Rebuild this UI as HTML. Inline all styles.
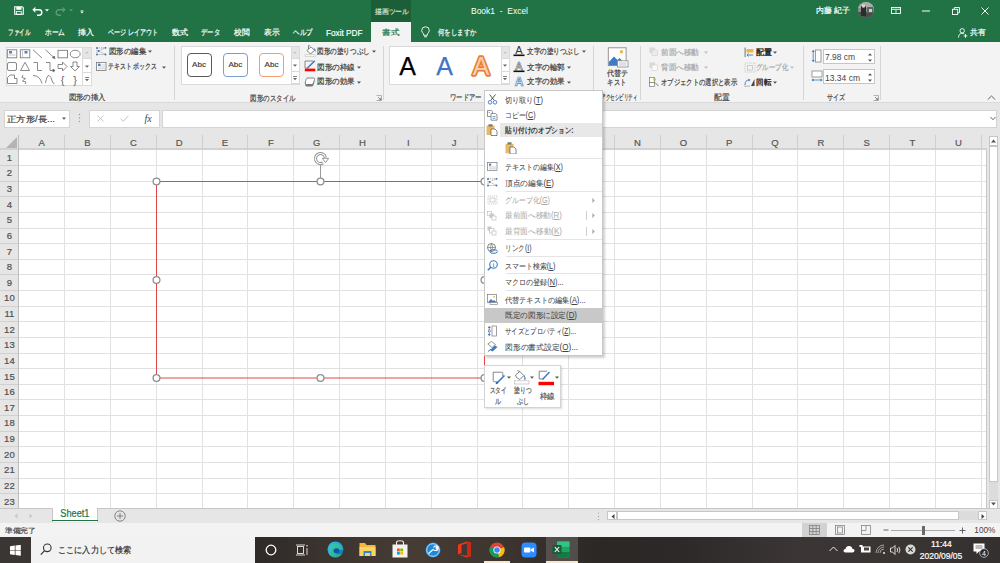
<!DOCTYPE html>
<html><head><meta charset="utf-8"><style>
html,body{margin:0;padding:0;width:1000px;height:563px;overflow:hidden;background:#fff;font-family:"Liberation Sans",sans-serif;}
body{position:relative;}
div,svg{box-sizing:border-box;}
[id^=t]{-webkit-text-stroke:0.2px currentColor;}
</style></head><body>
<div style="position:absolute;left:0px;top:0px;width:1000px;height:42px;background:#217346"></div>
<div style="position:absolute;left:371px;top:0px;width:40px;height:22px;background:#1b5e38"></div>
<div style="position:absolute;left:371px;top:22px;width:40px;height:20px;background:#f3f3f3"></div>
<div id="t0" style="position:absolute;left:375px;top:6.68px;font-size:7.39px;line-height:9.24px;color:#d8e6dc;font-weight:normal;font-family:'Liberation Sans', sans-serif;white-space:nowrap;transform:scaleX(0.9714);transform-origin:left center;">描画ツール</div>
<div id="t1" style="position:absolute;left:471px;top:4.56px;font-size:9.5px;line-height:11.88px;color:#ffffff;font-weight:normal;font-family:'Liberation Sans', sans-serif;white-space:nowrap;transform:scaleX(0.8921);transform-origin:left center;-webkit-text-stroke:0">Book1&nbsp;&nbsp;-&nbsp;&nbsp;Excel</div>
<div id="t2" style="position:absolute;left:816px;top:6.13px;font-size:8.27px;line-height:10.34px;color:#ffffff;font-weight:normal;font-family:'Liberation Sans', sans-serif;white-space:nowrap;transform:scaleX(0.9913);transform-origin:left center;">内藤 紀子</div>
<div id="t3" style="position:absolute;left:8px;top:28.13px;font-size:8.27px;line-height:10.34px;color:#ffffff;font-weight:normal;font-family:'Liberation Sans', sans-serif;white-space:nowrap;transform:scaleX(0.6875);transform-origin:left center;">ファイル</div>
<div id="t4" style="position:absolute;left:45px;top:28.13px;font-size:8.27px;line-height:10.34px;color:#ffffff;font-weight:normal;font-family:'Liberation Sans', sans-serif;white-space:nowrap;transform:scaleX(0.8333);transform-origin:left center;">ホーム</div>
<div id="t5" style="position:absolute;left:78px;top:28.13px;font-size:8.27px;line-height:10.34px;color:#ffffff;font-weight:normal;font-family:'Liberation Sans', sans-serif;white-space:nowrap;">挿入</div>
<div id="t6" style="position:absolute;left:108px;top:28.13px;font-size:8.27px;line-height:10.34px;color:#ffffff;font-weight:normal;font-family:'Liberation Sans', sans-serif;white-space:nowrap;transform:scaleX(0.7542);transform-origin:left center;">ページ レイアウト</div>
<div id="t7" style="position:absolute;left:172px;top:28.13px;font-size:8.27px;line-height:10.34px;color:#ffffff;font-weight:normal;font-family:'Liberation Sans', sans-serif;white-space:nowrap;">数式</div>
<div id="t8" style="position:absolute;left:201px;top:28.13px;font-size:8.27px;line-height:10.34px;color:#ffffff;font-weight:normal;font-family:'Liberation Sans', sans-serif;white-space:nowrap;transform:scaleX(0.7917);transform-origin:left center;">データ</div>
<div id="t9" style="position:absolute;left:234px;top:28.13px;font-size:8.27px;line-height:10.34px;color:#ffffff;font-weight:normal;font-family:'Liberation Sans', sans-serif;white-space:nowrap;transform:scaleX(0.9688);transform-origin:left center;">校閲</div>
<div id="t10" style="position:absolute;left:263.5px;top:28.13px;font-size:8.27px;line-height:10.34px;color:#ffffff;font-weight:normal;font-family:'Liberation Sans', sans-serif;white-space:nowrap;transform:scaleX(0.9688);transform-origin:left center;">表示</div>
<div id="t11" style="position:absolute;left:292.5px;top:28.13px;font-size:8.27px;line-height:10.34px;color:#ffffff;font-weight:normal;font-family:'Liberation Sans', sans-serif;white-space:nowrap;transform:scaleX(0.8125);transform-origin:left center;">ヘルプ</div>
<div id="t12" style="position:absolute;left:325.5px;top:26.56px;font-size:9.5px;line-height:11.88px;color:#ffffff;font-weight:normal;font-family:'Liberation Sans', sans-serif;white-space:nowrap;transform:scaleX(0.8642);transform-origin:left center;">Foxit PDF</div>
<div id="t13" style="position:absolute;left:382px;top:28.13px;font-size:8.27px;line-height:10.34px;color:#217346;font-weight:normal;font-family:'Liberation Sans', sans-serif;white-space:nowrap;transform:scaleX(1.0625);transform-origin:left center;">書式</div>
<div id="t14" style="position:absolute;left:437.5px;top:28.13px;font-size:8.27px;line-height:10.34px;color:#ffffff;font-weight:normal;font-family:'Liberation Sans', sans-serif;white-space:nowrap;transform:scaleX(0.8021);transform-origin:left center;">何をしますか</div>
<div id="t15" style="position:absolute;left:970px;top:28.13px;font-size:8.27px;line-height:10.34px;color:#ffffff;font-weight:normal;font-family:'Liberation Sans', sans-serif;white-space:nowrap;transform:scaleX(0.9688);transform-origin:left center;">共有</div>
<div style="position:absolute;left:0px;top:42px;width:1000px;height:61px;background:#f3f3f3;border-bottom:1px solid #dadada"></div>
<div style="position:absolute;left:174px;top:46px;width:1px;height:54px;background:#d6d6d6"></div>
<div style="position:absolute;left:383px;top:46px;width:1px;height:54px;background:#d6d6d6"></div>
<div style="position:absolute;left:593px;top:46px;width:1px;height:54px;background:#d6d6d6"></div>
<div style="position:absolute;left:640px;top:46px;width:1px;height:54px;background:#d6d6d6"></div>
<div style="position:absolute;left:803px;top:46px;width:1px;height:54px;background:#d6d6d6"></div>
<div style="position:absolute;left:880px;top:46px;width:1px;height:54px;background:#d6d6d6"></div>
<div style="position:absolute;left:0px;top:103px;width:1000px;height:30px;background:#e6e6e6"></div>
<div style="position:absolute;left:3.5px;top:109.5px;width:66px;height:18.5px;background:#fff;border:1px solid #d4d4d4"></div>
<div style="position:absolute;left:88.5px;top:109.5px;width:71px;height:18.5px;background:#fff;border:1px solid #d4d4d4"></div>
<div style="position:absolute;left:161.5px;top:109.5px;width:835px;height:18.5px;background:#fff;border:1px solid #d4d4d4"></div>
<div style="position:absolute;left:0px;top:133px;width:987px;height:16.5px;background:#e6e6e6"></div>
<div style="position:absolute;left:0px;top:149.5px;width:18.75px;height:359px;background:#e6e6e6"></div>
<div style="position:absolute;left:18.75px;top:149.5px;width:968px;height:359px;background:#fff"></div>
<svg style="position:absolute;left:0px;top:0px;" width="1000" height="563" viewBox="0 0 1000 563"><line x1="64.5" y1="149.9" x2="64.5" y2="508.5" stroke="#e1e1e1" stroke-width="1"/><line x1="110.5" y1="149.9" x2="110.5" y2="508.5" stroke="#e1e1e1" stroke-width="1"/><line x1="156.5" y1="149.9" x2="156.5" y2="508.5" stroke="#e1e1e1" stroke-width="1"/><line x1="202.5" y1="149.9" x2="202.5" y2="508.5" stroke="#e1e1e1" stroke-width="1"/><line x1="247.5" y1="149.9" x2="247.5" y2="508.5" stroke="#e1e1e1" stroke-width="1"/><line x1="293.5" y1="149.9" x2="293.5" y2="508.5" stroke="#e1e1e1" stroke-width="1"/><line x1="339.5" y1="149.9" x2="339.5" y2="508.5" stroke="#e1e1e1" stroke-width="1"/><line x1="385.5" y1="149.9" x2="385.5" y2="508.5" stroke="#e1e1e1" stroke-width="1"/><line x1="431.5" y1="149.9" x2="431.5" y2="508.5" stroke="#e1e1e1" stroke-width="1"/><line x1="477.5" y1="149.9" x2="477.5" y2="508.5" stroke="#e1e1e1" stroke-width="1"/><line x1="522.5" y1="149.9" x2="522.5" y2="508.5" stroke="#e1e1e1" stroke-width="1"/><line x1="568.5" y1="149.9" x2="568.5" y2="508.5" stroke="#e1e1e1" stroke-width="1"/><line x1="614.5" y1="149.9" x2="614.5" y2="508.5" stroke="#e1e1e1" stroke-width="1"/><line x1="660.5" y1="149.9" x2="660.5" y2="508.5" stroke="#e1e1e1" stroke-width="1"/><line x1="706.5" y1="149.9" x2="706.5" y2="508.5" stroke="#e1e1e1" stroke-width="1"/><line x1="752.5" y1="149.9" x2="752.5" y2="508.5" stroke="#e1e1e1" stroke-width="1"/><line x1="797.5" y1="149.9" x2="797.5" y2="508.5" stroke="#e1e1e1" stroke-width="1"/><line x1="843.5" y1="149.9" x2="843.5" y2="508.5" stroke="#e1e1e1" stroke-width="1"/><line x1="889.5" y1="149.9" x2="889.5" y2="508.5" stroke="#e1e1e1" stroke-width="1"/><line x1="935.5" y1="149.9" x2="935.5" y2="508.5" stroke="#e1e1e1" stroke-width="1"/><line x1="981.5" y1="149.9" x2="981.5" y2="508.5" stroke="#e1e1e1" stroke-width="1"/><line x1="19" y1="165.5" x2="987" y2="165.5" stroke="#e1e1e1" stroke-width="1"/><line x1="19" y1="181.5" x2="987" y2="181.5" stroke="#e1e1e1" stroke-width="1"/><line x1="19" y1="196.5" x2="987" y2="196.5" stroke="#e1e1e1" stroke-width="1"/><line x1="19" y1="212.5" x2="987" y2="212.5" stroke="#e1e1e1" stroke-width="1"/><line x1="19" y1="228.5" x2="987" y2="228.5" stroke="#e1e1e1" stroke-width="1"/><line x1="19" y1="243.5" x2="987" y2="243.5" stroke="#e1e1e1" stroke-width="1"/><line x1="19" y1="259.5" x2="987" y2="259.5" stroke="#e1e1e1" stroke-width="1"/><line x1="19" y1="274.5" x2="987" y2="274.5" stroke="#e1e1e1" stroke-width="1"/><line x1="19" y1="290.5" x2="987" y2="290.5" stroke="#e1e1e1" stroke-width="1"/><line x1="19" y1="306.5" x2="987" y2="306.5" stroke="#e1e1e1" stroke-width="1"/><line x1="19" y1="321.5" x2="987" y2="321.5" stroke="#e1e1e1" stroke-width="1"/><line x1="19" y1="337.5" x2="987" y2="337.5" stroke="#e1e1e1" stroke-width="1"/><line x1="19" y1="353.5" x2="987" y2="353.5" stroke="#e1e1e1" stroke-width="1"/><line x1="19" y1="368.5" x2="987" y2="368.5" stroke="#e1e1e1" stroke-width="1"/><line x1="19" y1="384.5" x2="987" y2="384.5" stroke="#e1e1e1" stroke-width="1"/><line x1="19" y1="399.5" x2="987" y2="399.5" stroke="#e1e1e1" stroke-width="1"/><line x1="19" y1="415.5" x2="987" y2="415.5" stroke="#e1e1e1" stroke-width="1"/><line x1="19" y1="431.5" x2="987" y2="431.5" stroke="#e1e1e1" stroke-width="1"/><line x1="19" y1="446.5" x2="987" y2="446.5" stroke="#e1e1e1" stroke-width="1"/><line x1="19" y1="462.5" x2="987" y2="462.5" stroke="#e1e1e1" stroke-width="1"/><line x1="19" y1="478.5" x2="987" y2="478.5" stroke="#e1e1e1" stroke-width="1"/><line x1="19" y1="493.5" x2="987" y2="493.5" stroke="#e1e1e1" stroke-width="1"/></svg>
<svg style="position:absolute;left:0;top:0" width="1000" height="563"><line x1="18.5" y1="135" x2="18.5" y2="149" stroke="#cfcfcf"/><line x1="64.5" y1="135" x2="64.5" y2="149" stroke="#cfcfcf"/><line x1="110.5" y1="135" x2="110.5" y2="149" stroke="#cfcfcf"/><line x1="156.5" y1="135" x2="156.5" y2="149" stroke="#cfcfcf"/><line x1="202.5" y1="135" x2="202.5" y2="149" stroke="#cfcfcf"/><line x1="247.5" y1="135" x2="247.5" y2="149" stroke="#cfcfcf"/><line x1="293.5" y1="135" x2="293.5" y2="149" stroke="#cfcfcf"/><line x1="339.5" y1="135" x2="339.5" y2="149" stroke="#cfcfcf"/><line x1="385.5" y1="135" x2="385.5" y2="149" stroke="#cfcfcf"/><line x1="431.5" y1="135" x2="431.5" y2="149" stroke="#cfcfcf"/><line x1="477.5" y1="135" x2="477.5" y2="149" stroke="#cfcfcf"/><line x1="522.5" y1="135" x2="522.5" y2="149" stroke="#cfcfcf"/><line x1="568.5" y1="135" x2="568.5" y2="149" stroke="#cfcfcf"/><line x1="614.5" y1="135" x2="614.5" y2="149" stroke="#cfcfcf"/><line x1="660.5" y1="135" x2="660.5" y2="149" stroke="#cfcfcf"/><line x1="706.5" y1="135" x2="706.5" y2="149" stroke="#cfcfcf"/><line x1="752.5" y1="135" x2="752.5" y2="149" stroke="#cfcfcf"/><line x1="797.5" y1="135" x2="797.5" y2="149" stroke="#cfcfcf"/><line x1="843.5" y1="135" x2="843.5" y2="149" stroke="#cfcfcf"/><line x1="889.5" y1="135" x2="889.5" y2="149" stroke="#cfcfcf"/><line x1="935.5" y1="135" x2="935.5" y2="149" stroke="#cfcfcf"/><line x1="981.5" y1="135" x2="981.5" y2="149" stroke="#cfcfcf"/><line x1="0" y1="165.5" x2="18.5" y2="165.5" stroke="#d0d0d0"/><line x1="0" y1="181.5" x2="18.5" y2="181.5" stroke="#d0d0d0"/><line x1="0" y1="196.5" x2="18.5" y2="196.5" stroke="#d0d0d0"/><line x1="0" y1="212.5" x2="18.5" y2="212.5" stroke="#d0d0d0"/><line x1="0" y1="228.5" x2="18.5" y2="228.5" stroke="#d0d0d0"/><line x1="0" y1="243.5" x2="18.5" y2="243.5" stroke="#d0d0d0"/><line x1="0" y1="259.5" x2="18.5" y2="259.5" stroke="#d0d0d0"/><line x1="0" y1="274.5" x2="18.5" y2="274.5" stroke="#d0d0d0"/><line x1="0" y1="290.5" x2="18.5" y2="290.5" stroke="#d0d0d0"/><line x1="0" y1="306.5" x2="18.5" y2="306.5" stroke="#d0d0d0"/><line x1="0" y1="321.5" x2="18.5" y2="321.5" stroke="#d0d0d0"/><line x1="0" y1="337.5" x2="18.5" y2="337.5" stroke="#d0d0d0"/><line x1="0" y1="353.5" x2="18.5" y2="353.5" stroke="#d0d0d0"/><line x1="0" y1="368.5" x2="18.5" y2="368.5" stroke="#d0d0d0"/><line x1="0" y1="384.5" x2="18.5" y2="384.5" stroke="#d0d0d0"/><line x1="0" y1="399.5" x2="18.5" y2="399.5" stroke="#d0d0d0"/><line x1="0" y1="415.5" x2="18.5" y2="415.5" stroke="#d0d0d0"/><line x1="0" y1="431.5" x2="18.5" y2="431.5" stroke="#d0d0d0"/><line x1="0" y1="446.5" x2="18.5" y2="446.5" stroke="#d0d0d0"/><line x1="0" y1="462.5" x2="18.5" y2="462.5" stroke="#d0d0d0"/><line x1="0" y1="478.5" x2="18.5" y2="478.5" stroke="#d0d0d0"/><line x1="0" y1="493.5" x2="18.5" y2="493.5" stroke="#d0d0d0"/><line x1="0" y1="509.5" x2="18.5" y2="509.5" stroke="#d0d0d0"/><line x1="0" y1="149" x2="987" y2="149" stroke="#bdbdbd" stroke-width="1"/><line x1="18.5" y1="135" x2="18.5" y2="508" stroke="#bdbdbd" stroke-width="1"/></svg>
<svg style="position:absolute;left:6px;top:137px;" width="12" height="11" viewBox="0 0 12 11"><polygon points="11,0 11,11 0,11" fill="#b4b4b4"/></svg>
<div style="position:absolute;left:-258.33335px;width:600px;text-align:center;top:136.66px;font-size:9.5px;line-height:11.88px;color:#555;font-weight:normal;font-family:'Liberation Sans', sans-serif;white-space:nowrap;-webkit-text-stroke:0"><span id="t16" style="display:inline-block;">A</span></div>
<div style="position:absolute;left:-212.50005px;width:600px;text-align:center;top:136.66px;font-size:9.5px;line-height:11.88px;color:#555;font-weight:normal;font-family:'Liberation Sans', sans-serif;white-space:nowrap;-webkit-text-stroke:0"><span id="t17" style="display:inline-block;">B</span></div>
<div style="position:absolute;left:-166.66675px;width:600px;text-align:center;top:136.66px;font-size:9.5px;line-height:11.88px;color:#555;font-weight:normal;font-family:'Liberation Sans', sans-serif;white-space:nowrap;-webkit-text-stroke:0"><span id="t18" style="display:inline-block;">C</span></div>
<div style="position:absolute;left:-120.83345px;width:600px;text-align:center;top:136.66px;font-size:9.5px;line-height:11.88px;color:#555;font-weight:normal;font-family:'Liberation Sans', sans-serif;white-space:nowrap;-webkit-text-stroke:0"><span id="t19" style="display:inline-block;">D</span></div>
<div style="position:absolute;left:-75.00014999999999px;width:600px;text-align:center;top:136.66px;font-size:9.5px;line-height:11.88px;color:#555;font-weight:normal;font-family:'Liberation Sans', sans-serif;white-space:nowrap;-webkit-text-stroke:0"><span id="t20" style="display:inline-block;">E</span></div>
<div style="position:absolute;left:-29.16685000000001px;width:600px;text-align:center;top:136.66px;font-size:9.5px;line-height:11.88px;color:#555;font-weight:normal;font-family:'Liberation Sans', sans-serif;white-space:nowrap;-webkit-text-stroke:0"><span id="t21" style="display:inline-block;">F</span></div>
<div style="position:absolute;left:16.666449999999998px;width:600px;text-align:center;top:136.66px;font-size:9.5px;line-height:11.88px;color:#555;font-weight:normal;font-family:'Liberation Sans', sans-serif;white-space:nowrap;-webkit-text-stroke:0"><span id="t22" style="display:inline-block;">G</span></div>
<div style="position:absolute;left:62.499750000000006px;width:600px;text-align:center;top:136.66px;font-size:9.5px;line-height:11.88px;color:#555;font-weight:normal;font-family:'Liberation Sans', sans-serif;white-space:nowrap;-webkit-text-stroke:0"><span id="t23" style="display:inline-block;">H</span></div>
<div style="position:absolute;left:108.33305000000001px;width:600px;text-align:center;top:136.66px;font-size:9.5px;line-height:11.88px;color:#555;font-weight:normal;font-family:'Liberation Sans', sans-serif;white-space:nowrap;-webkit-text-stroke:0"><span id="t24" style="display:inline-block;">I</span></div>
<div style="position:absolute;left:154.16635000000002px;width:600px;text-align:center;top:136.66px;font-size:9.5px;line-height:11.88px;color:#555;font-weight:normal;font-family:'Liberation Sans', sans-serif;white-space:nowrap;-webkit-text-stroke:0"><span id="t25" style="display:inline-block;">J</span></div>
<div style="position:absolute;left:199.99965000000003px;width:600px;text-align:center;top:136.66px;font-size:9.5px;line-height:11.88px;color:#555;font-weight:normal;font-family:'Liberation Sans', sans-serif;white-space:nowrap;-webkit-text-stroke:0"><span id="t26" style="display:inline-block;">K</span></div>
<div style="position:absolute;left:245.8329500000001px;width:600px;text-align:center;top:136.66px;font-size:9.5px;line-height:11.88px;color:#555;font-weight:normal;font-family:'Liberation Sans', sans-serif;white-space:nowrap;-webkit-text-stroke:0"><span id="t27" style="display:inline-block;">L</span></div>
<div style="position:absolute;left:291.66625px;width:600px;text-align:center;top:136.66px;font-size:9.5px;line-height:11.88px;color:#555;font-weight:normal;font-family:'Liberation Sans', sans-serif;white-space:nowrap;-webkit-text-stroke:0"><span id="t28" style="display:inline-block;">M</span></div>
<div style="position:absolute;left:337.49955px;width:600px;text-align:center;top:136.66px;font-size:9.5px;line-height:11.88px;color:#555;font-weight:normal;font-family:'Liberation Sans', sans-serif;white-space:nowrap;-webkit-text-stroke:0"><span id="t29" style="display:inline-block;">N</span></div>
<div style="position:absolute;left:383.33285px;width:600px;text-align:center;top:136.66px;font-size:9.5px;line-height:11.88px;color:#555;font-weight:normal;font-family:'Liberation Sans', sans-serif;white-space:nowrap;-webkit-text-stroke:0"><span id="t30" style="display:inline-block;">O</span></div>
<div style="position:absolute;left:429.16615px;width:600px;text-align:center;top:136.66px;font-size:9.5px;line-height:11.88px;color:#555;font-weight:normal;font-family:'Liberation Sans', sans-serif;white-space:nowrap;-webkit-text-stroke:0"><span id="t31" style="display:inline-block;">P</span></div>
<div style="position:absolute;left:474.99945px;width:600px;text-align:center;top:136.66px;font-size:9.5px;line-height:11.88px;color:#555;font-weight:normal;font-family:'Liberation Sans', sans-serif;white-space:nowrap;-webkit-text-stroke:0"><span id="t32" style="display:inline-block;">Q</span></div>
<div style="position:absolute;left:520.83275px;width:600px;text-align:center;top:136.66px;font-size:9.5px;line-height:11.88px;color:#555;font-weight:normal;font-family:'Liberation Sans', sans-serif;white-space:nowrap;-webkit-text-stroke:0"><span id="t33" style="display:inline-block;">R</span></div>
<div style="position:absolute;left:566.66605px;width:600px;text-align:center;top:136.66px;font-size:9.5px;line-height:11.88px;color:#555;font-weight:normal;font-family:'Liberation Sans', sans-serif;white-space:nowrap;-webkit-text-stroke:0"><span id="t34" style="display:inline-block;">S</span></div>
<div style="position:absolute;left:612.49935px;width:600px;text-align:center;top:136.66px;font-size:9.5px;line-height:11.88px;color:#555;font-weight:normal;font-family:'Liberation Sans', sans-serif;white-space:nowrap;-webkit-text-stroke:0"><span id="t35" style="display:inline-block;">T</span></div>
<div style="position:absolute;left:658.3326500000001px;width:600px;text-align:center;top:136.66px;font-size:9.5px;line-height:11.88px;color:#555;font-weight:normal;font-family:'Liberation Sans', sans-serif;white-space:nowrap;-webkit-text-stroke:0"><span id="t36" style="display:inline-block;">U</span></div>
<div style="position:absolute;left:-290.6px;width:600px;text-align:center;top:151.78px;font-size:9.5px;line-height:11.88px;color:#505050;font-weight:normal;font-family:'Liberation Sans', sans-serif;white-space:nowrap;-webkit-text-stroke:0"><span id="t37" style="display:inline-block;">1</span></div>
<div style="position:absolute;left:-290.6px;width:600px;text-align:center;top:167.40px;font-size:9.5px;line-height:11.88px;color:#505050;font-weight:normal;font-family:'Liberation Sans', sans-serif;white-space:nowrap;-webkit-text-stroke:0"><span id="t38" style="display:inline-block;">2</span></div>
<div style="position:absolute;left:-290.6px;width:600px;text-align:center;top:183.03px;font-size:9.5px;line-height:11.88px;color:#505050;font-weight:normal;font-family:'Liberation Sans', sans-serif;white-space:nowrap;-webkit-text-stroke:0"><span id="t39" style="display:inline-block;">3</span></div>
<div style="position:absolute;left:-290.6px;width:600px;text-align:center;top:198.65px;font-size:9.5px;line-height:11.88px;color:#505050;font-weight:normal;font-family:'Liberation Sans', sans-serif;white-space:nowrap;-webkit-text-stroke:0"><span id="t40" style="display:inline-block;">4</span></div>
<div style="position:absolute;left:-290.6px;width:600px;text-align:center;top:214.28px;font-size:9.5px;line-height:11.88px;color:#505050;font-weight:normal;font-family:'Liberation Sans', sans-serif;white-space:nowrap;-webkit-text-stroke:0"><span id="t41" style="display:inline-block;">5</span></div>
<div style="position:absolute;left:-290.6px;width:600px;text-align:center;top:229.90px;font-size:9.5px;line-height:11.88px;color:#505050;font-weight:normal;font-family:'Liberation Sans', sans-serif;white-space:nowrap;-webkit-text-stroke:0"><span id="t42" style="display:inline-block;">6</span></div>
<div style="position:absolute;left:-290.6px;width:600px;text-align:center;top:245.53px;font-size:9.5px;line-height:11.88px;color:#505050;font-weight:normal;font-family:'Liberation Sans', sans-serif;white-space:nowrap;-webkit-text-stroke:0"><span id="t43" style="display:inline-block;">7</span></div>
<div style="position:absolute;left:-290.6px;width:600px;text-align:center;top:261.15px;font-size:9.5px;line-height:11.88px;color:#505050;font-weight:normal;font-family:'Liberation Sans', sans-serif;white-space:nowrap;-webkit-text-stroke:0"><span id="t44" style="display:inline-block;">8</span></div>
<div style="position:absolute;left:-290.6px;width:600px;text-align:center;top:276.77px;font-size:9.5px;line-height:11.88px;color:#505050;font-weight:normal;font-family:'Liberation Sans', sans-serif;white-space:nowrap;-webkit-text-stroke:0"><span id="t45" style="display:inline-block;">9</span></div>
<div style="position:absolute;left:-290.6px;width:600px;text-align:center;top:292.40px;font-size:9.5px;line-height:11.88px;color:#505050;font-weight:normal;font-family:'Liberation Sans', sans-serif;white-space:nowrap;-webkit-text-stroke:0"><span id="t46" style="display:inline-block;">10</span></div>
<div style="position:absolute;left:-290.6px;width:600px;text-align:center;top:308.02px;font-size:9.5px;line-height:11.88px;color:#505050;font-weight:normal;font-family:'Liberation Sans', sans-serif;white-space:nowrap;-webkit-text-stroke:0"><span id="t47" style="display:inline-block;">11</span></div>
<div style="position:absolute;left:-290.6px;width:600px;text-align:center;top:323.65px;font-size:9.5px;line-height:11.88px;color:#505050;font-weight:normal;font-family:'Liberation Sans', sans-serif;white-space:nowrap;-webkit-text-stroke:0"><span id="t48" style="display:inline-block;">12</span></div>
<div style="position:absolute;left:-290.6px;width:600px;text-align:center;top:339.27px;font-size:9.5px;line-height:11.88px;color:#505050;font-weight:normal;font-family:'Liberation Sans', sans-serif;white-space:nowrap;-webkit-text-stroke:0"><span id="t49" style="display:inline-block;">13</span></div>
<div style="position:absolute;left:-290.6px;width:600px;text-align:center;top:354.90px;font-size:9.5px;line-height:11.88px;color:#505050;font-weight:normal;font-family:'Liberation Sans', sans-serif;white-space:nowrap;-webkit-text-stroke:0"><span id="t50" style="display:inline-block;">14</span></div>
<div style="position:absolute;left:-290.6px;width:600px;text-align:center;top:370.52px;font-size:9.5px;line-height:11.88px;color:#505050;font-weight:normal;font-family:'Liberation Sans', sans-serif;white-space:nowrap;-webkit-text-stroke:0"><span id="t51" style="display:inline-block;">15</span></div>
<div style="position:absolute;left:-290.6px;width:600px;text-align:center;top:386.15px;font-size:9.5px;line-height:11.88px;color:#505050;font-weight:normal;font-family:'Liberation Sans', sans-serif;white-space:nowrap;-webkit-text-stroke:0"><span id="t52" style="display:inline-block;">16</span></div>
<div style="position:absolute;left:-290.6px;width:600px;text-align:center;top:401.77px;font-size:9.5px;line-height:11.88px;color:#505050;font-weight:normal;font-family:'Liberation Sans', sans-serif;white-space:nowrap;-webkit-text-stroke:0"><span id="t53" style="display:inline-block;">17</span></div>
<div style="position:absolute;left:-290.6px;width:600px;text-align:center;top:417.40px;font-size:9.5px;line-height:11.88px;color:#505050;font-weight:normal;font-family:'Liberation Sans', sans-serif;white-space:nowrap;-webkit-text-stroke:0"><span id="t54" style="display:inline-block;">18</span></div>
<div style="position:absolute;left:-290.6px;width:600px;text-align:center;top:433.02px;font-size:9.5px;line-height:11.88px;color:#505050;font-weight:normal;font-family:'Liberation Sans', sans-serif;white-space:nowrap;-webkit-text-stroke:0"><span id="t55" style="display:inline-block;">19</span></div>
<div style="position:absolute;left:-290.6px;width:600px;text-align:center;top:448.65px;font-size:9.5px;line-height:11.88px;color:#505050;font-weight:normal;font-family:'Liberation Sans', sans-serif;white-space:nowrap;-webkit-text-stroke:0"><span id="t56" style="display:inline-block;">20</span></div>
<div style="position:absolute;left:-290.6px;width:600px;text-align:center;top:464.27px;font-size:9.5px;line-height:11.88px;color:#505050;font-weight:normal;font-family:'Liberation Sans', sans-serif;white-space:nowrap;-webkit-text-stroke:0"><span id="t57" style="display:inline-block;">21</span></div>
<div style="position:absolute;left:-290.6px;width:600px;text-align:center;top:479.90px;font-size:9.5px;line-height:11.88px;color:#505050;font-weight:normal;font-family:'Liberation Sans', sans-serif;white-space:nowrap;-webkit-text-stroke:0"><span id="t58" style="display:inline-block;">22</span></div>
<div style="position:absolute;left:-290.6px;width:600px;text-align:center;top:495.52px;font-size:9.5px;line-height:11.88px;color:#505050;font-weight:normal;font-family:'Liberation Sans', sans-serif;white-space:nowrap;-webkit-text-stroke:0"><span id="t59" style="display:inline-block;">23</span></div>
<div style="position:absolute;left:987px;top:133px;width:13px;height:376px;background:#e6e6e6"></div>
<div style="position:absolute;left:988.5px;top:135.5px;width:9.5px;height:10px;background:#fff;border:1px solid #c6c6c6"></div>
<div style="position:absolute;left:988.5px;top:146px;width:9.5px;height:336px;background:#fff;border:1px solid #c6c6c6"></div>
<div style="position:absolute;left:988.5px;top:499.5px;width:9.5px;height:9px;background:#fff;border:1px solid #c6c6c6"></div>
<div style="position:absolute;left:986px;top:149.5px;width:1px;height:359px;background:#c8c8c8"></div>
<div style="position:absolute;left:0px;top:508px;width:1000px;height:15px;background:#e6e6e6;border-top:1px solid #c6c6c6"></div>
<div style="position:absolute;left:52px;top:508px;width:45.6px;height:13.5px;background:#fff;border-left:1px solid #c6c6c6;border-right:1px solid #c6c6c6"></div>
<div style="position:absolute;left:52px;top:519.5px;width:45.6px;height:1.5px;background:#217346"></div>
<div style="position:absolute;left:-225.2px;width:600px;text-align:center;top:507.95px;font-size:10px;line-height:12.50px;color:#217346;font-weight:normal;font-family:'Liberation Sans', sans-serif;white-space:nowrap;-webkit-text-stroke:0"><span id="t60" style="display:inline-block;transform:scaleX(0.9147);transform-origin:center center;">Sheet1</span></div>
<div style="position:absolute;left:607.3px;top:511.4px;width:10.2px;height:9px;background:#fff;border:1px solid #c6c6c6"></div>
<div style="position:absolute;left:616.5px;top:511.4px;width:342.5px;height:9px;background:#fff;border:1px solid #c6c6c6"></div>
<div style="position:absolute;left:977.6px;top:511.4px;width:9px;height:9px;background:#fff;border:1px solid #c6c6c6"></div>
<div style="position:absolute;left:0px;top:523px;width:1000px;height:14px;background:#f3f3f3"></div>
<div id="t61" style="position:absolute;left:5px;top:526.18px;font-size:7.39px;line-height:9.24px;color:#444;font-weight:normal;font-family:'Liberation Sans', sans-serif;white-space:nowrap;transform:scaleX(1.1071);transform-origin:left center;">準備完了</div>
<div style="position:absolute;left:802px;top:523px;width:24.6px;height:14px;background:#d2d2d2"></div>
<div id="t62" style="position:absolute;right:5px;text-align:right;top:524.06px;font-size:9.5px;line-height:11.88px;color:#444;font-weight:normal;font-family:'Liberation Sans', sans-serif;white-space:nowrap;transform:scaleX(0.8638);transform-origin:right center;-webkit-text-stroke:0">100%</div>
<div style="position:absolute;left:0px;top:537px;width:1000px;height:26px;background:linear-gradient(90deg,#2e2a28 25.5%,#3a332e 32%,#463c34 41%,#3d3530 50%,#2b2826 60%,#2c2928 68%,#3b3635 80%,#3a3433 90%,#353030 100%)"></div>
<div style="position:absolute;left:0px;top:537px;width:31.2px;height:26px;background:#393634"></div>
<div style="position:absolute;left:31.2px;top:537px;width:224px;height:26px;background:#f2f2f2"></div>
<div id="t63" style="position:absolute;left:57.5px;top:544.96px;font-size:8.7px;line-height:10.88px;color:#333;font-weight:normal;font-family:'Liberation Sans', sans-serif;white-space:nowrap;transform:scaleX(0.9074);transform-origin:left center;">ここに入力して検索</div>
<div style="position:absolute;left:641.4px;width:600px;text-align:center;top:539.09px;font-size:8.5px;line-height:10.62px;color:#fff;font-weight:normal;font-family:'Liberation Sans', sans-serif;white-space:nowrap;-webkit-text-stroke:0"><span id="t64" style="display:inline-block;">11:44</span></div>
<div style="position:absolute;left:641px;width:600px;text-align:center;top:550.69px;font-size:8.5px;line-height:10.62px;color:#fff;font-weight:normal;font-family:'Liberation Sans', sans-serif;white-space:nowrap;-webkit-text-stroke:0"><span id="t65" style="display:inline-block;">2020/09/05</span></div>
<div style="position:absolute;left:546px;top:537px;width:31.6px;height:26px;background:rgba(255,255,255,0.16)"></div>
<div style="position:absolute;left:546px;top:561px;width:31.6px;height:2px;background:#f5e9c9"></div>
<div style="position:absolute;left:483.8px;top:561px;width:26.2px;height:2px;background:#f5e9c9"></div>
<div style="position:absolute;left:6px;top:46.5px;width:85.8px;height:39.8px;background:#fff;border:1px solid #dadada"></div>
<div style="position:absolute;left:82.2px;top:46.5px;width:9.6px;height:12.8px;background:#e6e6e6;border:1px solid #dadada"></div>
<div style="position:absolute;left:82.2px;top:59.3px;width:9.6px;height:13.3px;background:#fff;border:1px solid #dadada;border-top:none"></div>
<div style="position:absolute;left:82.2px;top:72.6px;width:9.6px;height:13.7px;background:#fff;border:1px solid #dadada;border-top:none"></div>
<svg style="position:absolute;left:85px;top:51px;" width="4" height="3" viewBox="0 0 4 3"><polygon points="0,2.5 4,2.5 2,0.3" fill="#c8c8c8"/></svg>
<svg style="position:absolute;left:85px;top:64.5px;" width="4" height="3" viewBox="0 0 4 3"><polygon points="0,0.5 4,0.5 2,2.8" fill="#666"/></svg>
<svg style="position:absolute;left:85px;top:77px;" width="4" height="5" viewBox="0 0 4 5"><line x1="0" y1="0.5" x2="4" y2="0.5" stroke="#666" stroke-width="0.8"/><polygon points="0,2 4,2 2,4.3" fill="#666"/></svg>
<svg style="position:absolute;left:6px;top:46.5px;" width="80" height="40" viewBox="0 0 80 40"><g fill="none" stroke="#747474" stroke-width="0.85"><rect x="1.3" y="2.8" width="9.5" height="8" fill="#fff"/><line x1="2.5" y1="8" x2="9.5" y2="8" stroke="#bbb"/><rect x="14.3" y="2.8" width="9.5" height="8"/><line x1="16.5" y1="3.5" x2="16.5" y2="10" stroke="#bbb"/><line x1="27" y1="2.8" x2="36" y2="11"/><line x1="39.5" y1="2.8" x2="48.5" y2="11"/><polygon points="49,11.5 46.5,10.8 48.3,9" fill="#555"/><rect x="52" y="3.3" width="9.5" height="7.5"/><ellipse cx="69.2" cy="7" rx="5" ry="3.8"/><rect x="1.5" y="15.5" width="9" height="8" rx="1.5"/><polygon points="19,15.3 23.5,23.5 14.5,23.5"/><polyline points="27.5,15.5 31.5,15.5 31.5,23.5 36,23.5"/><polyline points="40,15.5 44,15.5 44,23.5 48,23.5"/><polygon points="49,23.5 47,22 47,25" fill="#555"/><polygon points="52,17.5 56.5,17.5 56.5,15 61,19.5 56.5,24 56.5,21.5 52,21.5"/><polygon points="67,15 71,15 71,19.5 73.5,19.5 69,24 64.5,19.5 67,19.5"/><path d="M1.5,36.5 L1.5,30.5 L4,28 L8.5,28 L8.5,31.5 L11,31.5 L11,36.5 Z"/><path d="M17,28 L16,30.5 L19.5,31.5 L16.5,34 L20,35 L19,37"/><path d="M27,28.5 Q34,28.5 36,36.5"/><path d="M39.5,36 Q41,28 43,28.5 Q45,29 46.5,35 Q47,36.5 48.5,36.5"/></g><g fill="#6a6a6a" font-family="Liberation Sans" font-size="11"><text x="56.6" y="36.5" text-anchor="middle">{</text><text x="69.2" y="36.5" text-anchor="middle">}</text></g><g></g><rect x="3" y="4" width="3" height="2.5" fill="#4a86c8"/><rect x="18.5" y="4" width="3" height="2.5" fill="#4a86c8"/></svg>
<div style="position:absolute;left:-213.5px;width:600px;text-align:center;top:93.11px;font-size:7.83px;line-height:9.79px;color:#444;font-weight:normal;font-family:'Liberation Sans', sans-serif;white-space:nowrap;"><span id="t66" style="display:inline-block;transform:scaleX(0.9250);transform-origin:center center;">図形の挿入</span></div>
<svg style="position:absolute;left:96px;top:46.5px;" width="11" height="9" viewBox="0 0 11 9"><g fill="none" stroke="#888" stroke-width="0.7" stroke-dasharray="1.2,0.8"><polyline points="1,1 9.5,0.8"/><polyline points="1,1 1,7.5 9.5,7.5"/><polyline points="9.5,0.8 2.5,4 9.5,7.5"/></g><g fill="#3a72c0"><circle cx="1" cy="1" r="0.9"/><circle cx="9.5" cy="0.8" r="0.9"/><circle cx="1" cy="7.5" r="0.9"/><circle cx="9.5" cy="7.5" r="0.9"/><circle cx="2.5" cy="4" r="0.9"/></g></svg>
<div id="t67" style="position:absolute;left:108.8px;top:47.23px;font-size:8.27px;line-height:10.34px;color:#3b3b3b;font-weight:normal;font-family:'Liberation Sans', sans-serif;white-space:nowrap;transform:scaleX(0.9250);transform-origin:left center;">図形の編集</div>
<svg style="position:absolute;left:148.2px;top:50.3px;" width="4" height="3" viewBox="0 0 4 3"><polygon points="0,0.5 4,0.5 2,2.8" fill="#555"/></svg>
<svg style="position:absolute;left:96px;top:62px;" width="11" height="9" viewBox="0 0 11 9"><rect x="0.5" y="0.5" width="9.5" height="8" fill="#fff" stroke="#777" stroke-width="0.8"/><line x1="2" y1="5" x2="9" y2="5" stroke="#bbb" stroke-width="0.7"/><line x1="2" y1="6.8" x2="9" y2="6.8" stroke="#bbb" stroke-width="0.7"/><rect x="2" y="1.6" width="2.6" height="2.4" fill="#4a86c8"/><line x1="5.5" y1="3" x2="9" y2="3" stroke="#bbb" stroke-width="0.7"/></svg>
<div id="t68" style="position:absolute;left:108.4px;top:62.43px;font-size:8.27px;line-height:10.34px;color:#3b3b3b;font-weight:normal;font-family:'Liberation Sans', sans-serif;white-space:nowrap;transform:scaleX(0.7316);transform-origin:left center;">テキスト ボックス</div>
<svg style="position:absolute;left:162.4px;top:65.5px;" width="4" height="3" viewBox="0 0 4 3"><polygon points="0,0.5 4,0.5 2,2.8" fill="#555"/></svg>
<div style="position:absolute;left:181px;top:46px;width:119px;height:38.5px;background:#fff;border:1px solid #dadada"></div>
<div style="position:absolute;left:290.6px;top:46px;width:9.4px;height:12.8px;background:#e6e6e6;border:1px solid #dadada"></div>
<div style="position:absolute;left:290.6px;top:58.8px;width:9.4px;height:12.8px;background:#fff;border:1px solid #dadada;border-top:none"></div>
<div style="position:absolute;left:290.6px;top:71.6px;width:9.4px;height:12.9px;background:#fff;border:1px solid #dadada;border-top:none"></div>
<svg style="position:absolute;left:293.3px;top:50.5px;" width="4" height="3" viewBox="0 0 4 3"><polygon points="0,2.5 4,2.5 2,0.3" fill="#c8c8c8"/></svg>
<svg style="position:absolute;left:293.3px;top:63.5px;" width="4" height="3" viewBox="0 0 4 3"><polygon points="0,0.5 4,0.5 2,2.8" fill="#666"/></svg>
<svg style="position:absolute;left:293.3px;top:76px;" width="4" height="5" viewBox="0 0 4 5"><line x1="0" y1="0.5" x2="4" y2="0.5" stroke="#666" stroke-width="0.8"/><polygon points="0,2 4,2 2,4.3" fill="#666"/></svg>
<div style="position:absolute;left:186.5px;top:52.8px;width:25px;height:24.6px;background:#fff;border:1.2px solid #5a5a5a;border-radius:4px"></div>
<div style="position:absolute;left:-101.0px;width:600px;text-align:center;top:59.80px;font-size:8px;line-height:10.00px;color:#404040;font-weight:normal;font-family:'Liberation Sans', sans-serif;white-space:nowrap;-webkit-text-stroke:0"><span id="t69" style="display:inline-block;">Abc</span></div>
<div style="position:absolute;left:222.8px;top:52.8px;width:25px;height:24.6px;background:#fff;border:1px solid #7a9cd8;border-radius:4px"></div>
<div style="position:absolute;left:-64.69999999999999px;width:600px;text-align:center;top:59.80px;font-size:8px;line-height:10.00px;color:#404040;font-weight:normal;font-family:'Liberation Sans', sans-serif;white-space:nowrap;-webkit-text-stroke:0"><span id="t70" style="display:inline-block;">Abc</span></div>
<div style="position:absolute;left:259px;top:52.8px;width:25px;height:24.6px;background:#fff;border:1px solid #f0a070;border-radius:4px"></div>
<div style="position:absolute;left:-28.5px;width:600px;text-align:center;top:59.80px;font-size:8px;line-height:10.00px;color:#404040;font-weight:normal;font-family:'Liberation Sans', sans-serif;white-space:nowrap;-webkit-text-stroke:0"><span id="t71" style="display:inline-block;">Abc</span></div>
<svg style="position:absolute;left:304px;top:45px;" width="13" height="12" viewBox="0 0 13 12"><path d="M3,5.5 L7,1.8 L10.5,5.3 L6.5,9 Z" fill="#fff" stroke="#666" stroke-width="0.85"/><path d="M4.5,4.2 L4.5,1 Q4.5,0.3 5.2,0.3 L6,0.3" fill="none" stroke="#666" stroke-width="0.8"/><path d="M10,2.5 Q12,4.5 11.5,7 L10.5,5.3 Z" fill="#3c78c3"/><rect x="0.8" y="9.5" width="11" height="2" rx="0.5" fill="#f4f4f4" stroke="#c8c8c8" stroke-width="0.6"/></svg>
<div id="t72" style="position:absolute;left:317px;top:46.63px;font-size:8.27px;line-height:10.34px;color:#3b3b3b;font-weight:normal;font-family:'Liberation Sans', sans-serif;white-space:nowrap;transform:scaleX(0.8281);transform-origin:left center;">図形の塗りつぶし</div>
<svg style="position:absolute;left:372px;top:50.0px;" width="4" height="3" viewBox="0 0 4 3"><polygon points="0,0.5 4,0.5 2,2.8" fill="#555"/></svg>
<svg style="position:absolute;left:304px;top:60px;" width="13" height="12" viewBox="0 0 13 12"><path d="M9,1 L1,1 L1,8 L4,8" fill="none" stroke="#777" stroke-width="0.85"/><path d="M3.5,8 L10.8,0.8" stroke="#3c78c3" stroke-width="1.5"/><rect x="0.8" y="8.6" width="10.5" height="2.7" fill="#f00"/></svg>
<div id="t73" style="position:absolute;left:317px;top:62.63px;font-size:8.27px;line-height:10.34px;color:#3b3b3b;font-weight:normal;font-family:'Liberation Sans', sans-serif;white-space:nowrap;transform:scaleX(0.9500);transform-origin:left center;">図形の枠線</div>
<svg style="position:absolute;left:356.6px;top:66.0px;" width="4" height="3" viewBox="0 0 4 3"><polygon points="0,0.5 4,0.5 2,2.8" fill="#555"/></svg>
<svg style="position:absolute;left:304px;top:76.5px;" width="12" height="11" viewBox="0 0 12 11"><path d="M1.2,6.5 L1.2,8 Q1.2,9.5 3,9.5 L7.5,9.5 Q9,9.5 9.5,8 L10.5,4.5 L9.5,4.5 Z" fill="#777"/><path d="M2,2.5 Q2.5,1 4,1 L9.5,1 Q11,1 10.5,2.5 L9.5,6 Q9,7.5 7.5,7.5 L2.5,7.5 Q1,7.5 1.2,6 Z" fill="#fff" stroke="#666" stroke-width="0.8"/></svg>
<div id="t74" style="position:absolute;left:317px;top:77.13px;font-size:8.27px;line-height:10.34px;color:#3b3b3b;font-weight:normal;font-family:'Liberation Sans', sans-serif;white-space:nowrap;transform:scaleX(0.9375);transform-origin:left center;">図形の効果</div>
<svg style="position:absolute;left:357px;top:80.5px;" width="4" height="3" viewBox="0 0 4 3"><polygon points="0,0.5 4,0.5 2,2.8" fill="#555"/></svg>
<div style="position:absolute;left:-26.600000000000023px;width:600px;text-align:center;top:93.51px;font-size:7.83px;line-height:9.79px;color:#444;font-weight:normal;font-family:'Liberation Sans', sans-serif;white-space:nowrap;"><span id="t75" style="display:inline-block;transform:scaleX(0.8036);transform-origin:center center;">図形のスタイル</span></div>
<svg style="position:absolute;left:376px;top:95px;" width="6" height="6" viewBox="0 0 6 6"><path d="M0.5,0.5 L5.5,0.5 L5.5,5.5 L0.5,5.5" fill="none" stroke="#888" stroke-width="0.6"/><path d="M2,2 L4.8,4.8 M4.8,2.8 L4.8,4.8 L2.8,4.8" fill="none" stroke="#666" stroke-width="0.7"/></svg>
<div style="position:absolute;left:389px;top:46px;width:121px;height:38.5px;background:#fff;border:1px solid #dadada"></div>
<div style="position:absolute;left:500.6px;top:46px;width:9.4px;height:12.8px;background:#e6e6e6;border:1px solid #dadada"></div>
<div style="position:absolute;left:500.6px;top:58.8px;width:9.4px;height:12.8px;background:#fff;border:1px solid #dadada;border-top:none"></div>
<div style="position:absolute;left:500.6px;top:71.6px;width:9.4px;height:12.9px;background:#fff;border:1px solid #dadada;border-top:none"></div>
<svg style="position:absolute;left:503.3px;top:50.5px;" width="4" height="3" viewBox="0 0 4 3"><polygon points="0,2.5 4,2.5 2,0.3" fill="#c8c8c8"/></svg>
<svg style="position:absolute;left:503.3px;top:63.5px;" width="4" height="3" viewBox="0 0 4 3"><polygon points="0,0.5 4,0.5 2,2.8" fill="#666"/></svg>
<svg style="position:absolute;left:503.3px;top:76px;" width="4" height="5" viewBox="0 0 4 5"><line x1="0" y1="0.5" x2="4" y2="0.5" stroke="#666" stroke-width="0.8"/><polygon points="0,2 4,2 2,4.3" fill="#666"/></svg>
<svg style="position:absolute;left:396px;top:54px;" width="100" height="24" viewBox="0 0 100 24"><text x="11.5" y="21" font-family="Liberation Sans" font-size="25" text-anchor="middle" fill="#000" stroke="#000" stroke-width="0.25">A</text><text x="48.5" y="21" font-family="Liberation Sans" font-size="25" text-anchor="middle" fill="#4472c4" stroke="#4472c4" stroke-width="0.25">A</text><text x="85" y="21" font-family="Liberation Sans" font-size="25" text-anchor="middle" fill="#f8cdb0" stroke="#ed7d31" stroke-width="3.4" stroke-linejoin="round" paint-order="stroke">A</text></svg>
<svg style="position:absolute;left:513px;top:45px;" width="12" height="12" viewBox="0 0 12 12"><text x="6" y="9" font-family="Liberation Sans" font-size="11" text-anchor="middle" fill="#333">A</text><rect x="0.5" y="9.5" width="11" height="1.6" fill="#111"/></svg>
<div id="t76" style="position:absolute;left:527px;top:46.63px;font-size:8.27px;line-height:10.34px;color:#3b3b3b;font-weight:normal;font-family:'Liberation Sans', sans-serif;white-space:nowrap;transform:scaleX(0.8203);transform-origin:left center;">文字の塗りつぶし</div>
<svg style="position:absolute;left:582px;top:50.0px;" width="4" height="3" viewBox="0 0 4 3"><polygon points="0,0.5 4,0.5 2,2.8" fill="#555"/></svg>
<svg style="position:absolute;left:513px;top:61px;" width="12" height="12" viewBox="0 0 12 12"><text x="6" y="9" font-family="Liberation Sans" font-size="11" text-anchor="middle" fill="#fff" stroke="#444" stroke-width="0.5">A</text><rect x="0.5" y="9.5" width="11" height="1.6" fill="#111"/></svg>
<div id="t77" style="position:absolute;left:527px;top:62.63px;font-size:8.27px;line-height:10.34px;color:#3b3b3b;font-weight:normal;font-family:'Liberation Sans', sans-serif;white-space:nowrap;transform:scaleX(0.9500);transform-origin:left center;">文字の輪郭</div>
<svg style="position:absolute;left:566.5px;top:66.0px;" width="4" height="3" viewBox="0 0 4 3"><polygon points="0,0.5 4,0.5 2,2.8" fill="#555"/></svg>
<svg style="position:absolute;left:513px;top:76px;" width="12" height="12" viewBox="0 0 12 12"><text x="6" y="10" font-family="Liberation Sans" font-size="12" font-weight="bold" text-anchor="middle" fill="#eaf1fa" stroke="#4a86c8" stroke-width="0.7">A</text></svg>
<div id="t78" style="position:absolute;left:527px;top:77.13px;font-size:8.27px;line-height:10.34px;color:#3b3b3b;font-weight:normal;font-family:'Liberation Sans', sans-serif;white-space:nowrap;transform:scaleX(0.9375);transform-origin:left center;">文字の効果</div>
<svg style="position:absolute;left:567px;top:80.5px;" width="4" height="3" viewBox="0 0 4 3"><polygon points="0,0.5 4,0.5 2,2.8" fill="#555"/></svg>
<div id="t79" style="position:absolute;left:450.4px;top:93.11px;font-size:7.83px;line-height:9.79px;color:#444;font-weight:normal;font-family:'Liberation Sans', sans-serif;white-space:nowrap;transform:scaleX(0.7955);transform-origin:left center;">ワードアートのスタイル</div>
<svg style="position:absolute;left:606px;top:46.5px;" width="23" height="21" viewBox="0 0 23 21"><rect x="2.3" y="0.8" width="17.8" height="17.8" fill="#fff" stroke="#8a8a8a" stroke-width="0.9"/><path d="M2.8,18.2 L2.8,15 L8,9.5 L11.5,13 L13.5,11 L18,15.5 L18,18.2 Z" fill="#3f7cc4"/><circle cx="15.5" cy="4.7" r="1.7" fill="#f0b642"/><rect x="11.5" y="13.8" width="10.5" height="6.2" fill="#fff" stroke="#8a8a8a" stroke-width="0.8"/><line x1="13" y1="16" x2="20.5" y2="16" stroke="#9a9a9a" stroke-width="0.6"/><line x1="13" y1="18" x2="20.5" y2="18" stroke="#9a9a9a" stroke-width="0.6"/></svg>
<div style="position:absolute;left:317px;width:600px;text-align:center;top:68.93px;font-size:8.27px;line-height:10.34px;color:#3b3b3b;font-weight:normal;font-family:'Liberation Sans', sans-serif;white-space:nowrap;"><span id="t80" style="display:inline-block;transform:scaleX(0.8750);transform-origin:center center;">代替テ</span></div>
<div style="position:absolute;left:317px;width:600px;text-align:center;top:78.43px;font-size:8.27px;line-height:10.34px;color:#3b3b3b;font-weight:normal;font-family:'Liberation Sans', sans-serif;white-space:nowrap;"><span id="t81" style="display:inline-block;transform:scaleX(0.7917);transform-origin:center center;">キスト</span></div>
<div id="t82" style="position:absolute;left:601px;top:93.11px;font-size:7.83px;line-height:9.79px;color:#444;font-weight:normal;font-family:'Liberation Sans', sans-serif;white-space:nowrap;transform:scaleX(0.5625);transform-origin:left center;">アクセシビリティ</div>
<svg style="position:absolute;left:648.5px;top:46.5px;" width="9" height="10" viewBox="0 0 9 10"><rect x="0.5" y="0.5" width="5.5" height="5.5" fill="#d8d8d8"/><rect x="3" y="3" width="5.5" height="5.5" fill="#ececec" stroke="#cfcfcf" stroke-width="0.6"/></svg>
<div id="t83" style="position:absolute;left:660.8px;top:47.63px;font-size:8.27px;line-height:10.34px;color:#a8a8a8;font-weight:normal;font-family:'Liberation Sans', sans-serif;white-space:nowrap;transform:scaleX(0.9500);transform-origin:left center;">前面へ移動</div>
<svg style="position:absolute;left:704.4px;top:51.0px;" width="4" height="3" viewBox="0 0 4 3"><polygon points="0,0.5 4,0.5 2,2.8" fill="#bcbcbc"/></svg>
<svg style="position:absolute;left:648.5px;top:61.5px;" width="9" height="10" viewBox="0 0 9 10"><rect x="0.5" y="0.5" width="5.5" height="5.5" fill="#d8d8d8"/><rect x="3" y="3" width="5.5" height="5.5" fill="#fafafa" stroke="#cfcfcf" stroke-width="0.6"/></svg>
<div id="t84" style="position:absolute;left:660.8px;top:62.63px;font-size:8.27px;line-height:10.34px;color:#a8a8a8;font-weight:normal;font-family:'Liberation Sans', sans-serif;white-space:nowrap;transform:scaleX(0.9500);transform-origin:left center;">背面へ移動</div>
<svg style="position:absolute;left:704.4px;top:66.0px;" width="4" height="3" viewBox="0 0 4 3"><polygon points="0,0.5 4,0.5 2,2.8" fill="#bcbcbc"/></svg>
<svg style="position:absolute;left:648.5px;top:76.5px;" width="10" height="10" viewBox="0 0 10 10"><rect x="0.5" y="0.5" width="5" height="5" fill="#fff" stroke="#777" stroke-width="0.7"/><rect x="0.5" y="5.5" width="5" height="4" fill="#fff" stroke="#777" stroke-width="0.7"/><rect x="4" y="1.5" width="3" height="2" fill="#f0b642"/><path d="M6,5.5 L9.5,9" stroke="#555" stroke-width="0.8"/></svg>
<div id="t85" style="position:absolute;left:660.5px;top:77.63px;font-size:8.27px;line-height:10.34px;color:#3b3b3b;font-weight:normal;font-family:'Liberation Sans', sans-serif;white-space:nowrap;transform:scaleX(0.7917);transform-origin:left center;">オブジェクトの選択と表示</div>
<svg style="position:absolute;left:743.5px;top:46.5px;" width="10" height="11" viewBox="0 0 10 11"><rect x="0.5" y="0.5" width="1.2" height="9.5" fill="#888"/><rect x="2.5" y="2" width="7" height="3.5" fill="#f0b642"/><path d="M9,8 L3,8 M4.5,6.5 L3,8 L4.5,9.5" stroke="#3c78c3" stroke-width="0.9" fill="none"/></svg>
<div id="t86" style="position:absolute;left:755.5px;top:47.63px;font-size:8.27px;line-height:10.34px;color:#222;font-weight:normal;font-family:'Liberation Sans', sans-serif;white-space:nowrap;-webkit-text-stroke:0.35px #222">配置</div>
<svg style="position:absolute;left:773.2px;top:51.0px;" width="4" height="3" viewBox="0 0 4 3"><polygon points="0,0.5 4,0.5 2,2.8" fill="#555"/></svg>
<svg style="position:absolute;left:743.5px;top:61.5px;" width="13" height="11" viewBox="0 0 13 11"><rect x="1" y="1" width="10" height="9" fill="none" stroke="#c4c4c4" stroke-width="0.8" stroke-dasharray="1.2,0.8"/><rect x="3.5" y="3.5" width="5" height="4.5" fill="none" stroke="#c4c4c4" stroke-width="0.8"/></svg>
<div id="t87" style="position:absolute;left:755.5px;top:62.63px;font-size:8.27px;line-height:10.34px;color:#a8a8a8;font-weight:normal;font-family:'Liberation Sans', sans-serif;white-space:nowrap;transform:scaleX(0.8000);transform-origin:left center;">グループ化</div>
<svg style="position:absolute;left:790.3px;top:66.0px;" width="4" height="3" viewBox="0 0 4 3"><polygon points="0,0.5 4,0.5 2,2.8" fill="#bcbcbc"/></svg>
<svg style="position:absolute;left:743.5px;top:77px;" width="11" height="10" viewBox="0 0 11 10"><path d="M1,8 Q1,3 5,3" fill="none" stroke="#3c78c3" stroke-width="0.9"/><polygon points="4.5,1.5 6.5,3 4.5,4.5" fill="#3c78c3"/><polygon points="7,9 10.5,9 10.5,2" fill="#444"/><line x1="0" y1="9.2" x2="6" y2="9.2" stroke="#888" stroke-width="0.6"/></svg>
<div id="t88" style="position:absolute;left:756px;top:77.63px;font-size:8.27px;line-height:10.34px;color:#222;font-weight:normal;font-family:'Liberation Sans', sans-serif;white-space:nowrap;transform:scaleX(0.9375);transform-origin:left center;-webkit-text-stroke:0.35px #222">回転</div>
<svg style="position:absolute;left:773.2px;top:81.0px;" width="4" height="3" viewBox="0 0 4 3"><polygon points="0,0.5 4,0.5 2,2.8" fill="#555"/></svg>
<div style="position:absolute;left:421.79999999999995px;width:600px;text-align:center;top:92.83px;font-size:8.27px;line-height:10.34px;color:#444;font-weight:normal;font-family:'Liberation Sans', sans-serif;white-space:nowrap;"><span id="t89" style="display:inline-block;transform:scaleX(0.9750);transform-origin:center center;">配置</span></div>
<svg style="position:absolute;left:810.5px;top:49px;" width="12" height="14" viewBox="0 0 12 14"><rect x="4.5" y="1" width="5.5" height="12" fill="#fff" stroke="#777" stroke-width="0.7"/><line x1="2.2" y1="2" x2="2.2" y2="12" stroke="#3c78c3" stroke-width="0.8"/><polygon points="0.7,3 3.7,3 2.2,0.8" fill="#3c78c3"/><polygon points="0.7,11 3.7,11 2.2,13.2" fill="#3c78c3"/></svg>
<svg style="position:absolute;left:810.5px;top:69.5px;" width="12" height="14" viewBox="0 0 12 14"><rect x="1" y="1" width="10" height="6" fill="#fff" stroke="#777" stroke-width="0.7"/><line x1="1.5" y1="10" x2="10.5" y2="10" stroke="#3c78c3" stroke-width="0.8"/><polygon points="2.5,8.5 2.5,11.5 0.3,10" fill="#3c78c3"/><polygon points="9.5,8.5 9.5,11.5 11.7,10" fill="#3c78c3"/></svg>
<div style="position:absolute;left:823.4px;top:49px;width:51.4px;height:14.6px;background:#fff;border:1px solid #c6c6c6"></div>
<div style="position:absolute;left:823.4px;top:69.4px;width:51.4px;height:15px;background:#fff;border:1px solid #c6c6c6"></div>
<div id="t90" style="position:absolute;left:825px;top:51.36px;font-size:9.5px;line-height:11.88px;color:#444;font-weight:normal;font-family:'Liberation Sans', sans-serif;white-space:nowrap;transform:scaleX(0.8877);transform-origin:left center;-webkit-text-stroke:0">7.98 cm</div>
<div id="t91" style="position:absolute;left:825px;top:71.86px;font-size:9.5px;line-height:11.88px;color:#444;font-weight:normal;font-family:'Liberation Sans', sans-serif;white-space:nowrap;transform:scaleX(0.8956);transform-origin:left center;-webkit-text-stroke:0">13.34 cm</div>
<svg style="position:absolute;left:867.5px;top:52.5px;" width="4" height="3" viewBox="0 0 4 3"><polygon points="0,2.5 4,2.5 2,0.3" fill="#555"/></svg>
<svg style="position:absolute;left:867.5px;top:59.0px;" width="4" height="3" viewBox="0 0 4 3"><polygon points="0,0.5 4,0.5 2,2.7" fill="#555"/></svg>
<svg style="position:absolute;left:867.5px;top:72.8px;" width="4" height="3" viewBox="0 0 4 3"><polygon points="0,2.5 4,2.5 2,0.3" fill="#555"/></svg>
<svg style="position:absolute;left:867.5px;top:79.3px;" width="4" height="3" viewBox="0 0 4 3"><polygon points="0,0.5 4,0.5 2,2.7" fill="#555"/></svg>
<div style="position:absolute;left:536px;width:600px;text-align:center;top:92.83px;font-size:8.27px;line-height:10.34px;color:#444;font-weight:normal;font-family:'Liberation Sans', sans-serif;white-space:nowrap;"><span id="t92" style="display:inline-block;transform:scaleX(0.7500);transform-origin:center center;">サイズ</span></div>
<svg style="position:absolute;left:873px;top:95px;" width="6" height="6" viewBox="0 0 6 6"><path d="M0.5,0.5 L5.5,0.5 L5.5,5.5 L0.5,5.5" fill="none" stroke="#888" stroke-width="0.6"/><path d="M2,2 L4.8,4.8 M4.8,2.8 L4.8,4.8 L2.8,4.8" fill="none" stroke="#666" stroke-width="0.7"/></svg>
<svg style="position:absolute;left:987px;top:95px;" width="9" height="6" viewBox="0 0 9 6"><polyline points="0.8,4.5 4.5,1 8.2,4.5" fill="none" stroke="#555" stroke-width="0.9"/></svg>
<svg style="position:absolute;left:13.5px;top:6px;" width="10" height="9" viewBox="0 0 10 9"><path d="M0.7,0.7 L8.3,0.7 L9.3,1.7 L9.3,8.3 L0.7,8.3 Z" fill="none" stroke="#fff" stroke-width="1.1"/><rect x="2.3" y="1" width="5.2" height="2.8" fill="#fff"/><rect x="2.5" y="5.5" width="4.8" height="2.8" fill="none" stroke="#fff" stroke-width="0.8"/></svg>
<svg style="position:absolute;left:31.5px;top:6px;" width="11" height="10" viewBox="0 0 11 10"><path d="M2.5,3.8 L7,3.8 Q9.8,3.8 9.8,6.5 Q9.8,9.2 7,9.2 L5,9.2" fill="none" stroke="#fff" stroke-width="1.4"/><polygon points="0.3,3.8 3.3,0.8 3.3,6.8" fill="#fff"/></svg>
<svg style="position:absolute;left:44.5px;top:8.5px;" width="4" height="3" viewBox="0 0 4 3"><polygon points="0,0.3 4,0.3 2,2.5" fill="#fff"/></svg>
<svg style="position:absolute;left:54.5px;top:6px;" width="11" height="10" viewBox="0 0 11 10"><path d="M8.5,3.8 L4,3.8 Q1.2,3.8 1.2,6.5 Q1.2,9.2 4,9.2 L6,9.2" fill="none" stroke="#5e9a77" stroke-width="1.4"/><polygon points="10.7,3.8 7.7,0.8 7.7,6.8" fill="#5e9a77"/></svg>
<svg style="position:absolute;left:68.5px;top:8.5px;" width="4" height="3" viewBox="0 0 4 3"><polygon points="0,0.3 4,0.3 2,2.5" fill="#5e9a77"/></svg>
<svg style="position:absolute;left:80px;top:9.5px;" width="4" height="4" viewBox="0 0 4 4"><rect x="0.5" y="0.5" width="3" height="0.6" fill="#fff"/><polygon points="0.3,1.6 3.7,1.6 2,3.6" fill="#fff"/></svg>
<svg style="position:absolute;left:857.5px;top:2px;" width="16" height="16" viewBox="0 0 16 16"><defs><clipPath id="av"><circle cx="8" cy="8" r="8"/></clipPath></defs><g clip-path="url(#av)"><rect width="16" height="16" fill="#8a8f8c"/><rect x="0" y="0" width="16" height="6" fill="#a9aeab"/><rect x="0" y="10" width="16" height="6" fill="#4a4d4b"/><rect x="3" y="4" width="5" height="10" fill="#2a2c2b"/><rect x="9" y="5" width="6" height="6" fill="#5d6462"/><rect x="11" y="7" width="3" height="3" fill="#c9d0ce"/><circle cx="5.5" cy="4" r="1.8" fill="#d8d4cc"/></g></svg>
<svg style="position:absolute;left:891px;top:7px;" width="10" height="7" viewBox="0 0 10 7"><rect x="0.5" y="0.5" width="9" height="6" fill="none" stroke="#fff" stroke-width="0.9"/><line x1="0.5" y1="2.3" x2="9.5" y2="2.3" stroke="#fff" stroke-width="0.9"/><line x1="5" y1="2.3" x2="5" y2="6.5" stroke="#fff" stroke-width="0.8"/></svg>
<svg style="position:absolute;left:921.5px;top:9.5px;" width="8" height="2" viewBox="0 0 8 2"><line x1="0" y1="1" x2="8" y2="1" stroke="#fff" stroke-width="1"/></svg>
<svg style="position:absolute;left:951.5px;top:6.5px;" width="8" height="8" viewBox="0 0 8 8"><rect x="0.5" y="2.3" width="5.2" height="5.2" fill="none" stroke="#fff" stroke-width="0.9"/><polyline points="2.3,2.3 2.3,0.5 7.5,0.5 7.5,5.7 5.7,5.7" fill="none" stroke="#fff" stroke-width="0.9"/></svg>
<svg style="position:absolute;left:981px;top:6.5px;" width="8" height="8" viewBox="0 0 8 8"><path d="M0.5,0.5 L7.5,7.5 M7.5,0.5 L0.5,7.5" stroke="#fff" stroke-width="1"/></svg>
<svg style="position:absolute;left:420.5px;top:26px;" width="9" height="12" viewBox="0 0 9 12"><path d="M4.5,0.8 Q8.3,0.8 8.3,4.5 Q8.3,6.3 6.5,7.7 L6.3,9.3 L2.7,9.3 L2.5,7.7 Q0.7,6.3 0.7,4.5 Q0.7,0.8 4.5,0.8 Z" fill="none" stroke="#fff" stroke-width="0.9"/><line x1="3" y1="10.8" x2="6" y2="10.8" stroke="#fff" stroke-width="0.9"/></svg>
<svg style="position:absolute;left:958px;top:27.5px;" width="10" height="10" viewBox="0 0 10 10"><circle cx="4.2" cy="2.8" r="2.2" fill="none" stroke="#fff" stroke-width="0.9"/><path d="M0.5,9.5 Q0.7,5.3 4.2,5.3 Q5.5,5.3 6.2,5.9" fill="none" stroke="#fff" stroke-width="0.9"/><path d="M7.5,6 L7.5,9.8 M5.6,7.9 L9.4,7.9" stroke="#fff" stroke-width="0.9"/></svg>
<div id="t93" style="position:absolute;left:7px;top:114.63px;font-size:8.27px;line-height:10.34px;color:#444;font-weight:normal;font-family:'Liberation Sans', sans-serif;white-space:nowrap;transform:scaleX(1.1654);transform-origin:left center;">正方形/長...</div>
<svg style="position:absolute;left:61.5px;top:117.0px;" width="4" height="3" viewBox="0 0 4 3"><polygon points="0,0.5 4,0.5 2,2.8" fill="#555"/></svg>
<svg style="position:absolute;left:78px;top:113px;" width="3" height="11" viewBox="0 0 3 11"><circle cx="1.5" cy="1.5" r="0.7" fill="#999"/><circle cx="1.5" cy="5" r="0.7" fill="#999"/><circle cx="1.5" cy="8.5" r="0.7" fill="#999"/></svg>
<svg style="position:absolute;left:96.5px;top:115px;" width="7" height="7" viewBox="0 0 7 7"><path d="M0.5,0.5 L6.5,6.5 M6.5,0.5 L0.5,6.5" stroke="#c0c0c0" stroke-width="0.9"/></svg>
<svg style="position:absolute;left:119.5px;top:115px;" width="9" height="7" viewBox="0 0 9 7"><polyline points="0.5,3.5 3.3,6.3 8.5,0.8" fill="none" stroke="#c0c0c0" stroke-width="0.9"/></svg>
<svg style="position:absolute;left:143px;top:112px;" width="10" height="12" viewBox="0 0 10 12"><text x="5" y="9.5" font-family="Liberation Serif" font-style="italic" font-size="10" text-anchor="middle" fill="#444">fx</text></svg>
<svg style="position:absolute;left:990px;top:116px;" width="6" height="5" viewBox="0 0 6 5"><polyline points="0.5,1 3,3.7 5.5,1" fill="none" stroke="#555" stroke-width="0.9"/></svg>
<svg style="position:absolute;left:0px;top:0px;pointer-events:none" width="1000" height="563" viewBox="0 0 1000 563"><rect x="156.5" y="181.5" width="328" height="196.5" fill="none" stroke="#e04848" stroke-width="1"/><line x1="320.5" y1="164.5" x2="320.5" y2="181" stroke="#8f8f8f" stroke-width="0.9"/><circle cx="156.5" cy="181.5" r="3.4" fill="#fff" stroke="#8f8f8f" stroke-width="1.3"/><circle cx="320.5" cy="181.5" r="3.4" fill="#fff" stroke="#8f8f8f" stroke-width="1.3"/><circle cx="484.5" cy="181.5" r="3.4" fill="#fff" stroke="#8f8f8f" stroke-width="1.3"/><circle cx="156.5" cy="280" r="3.4" fill="#fff" stroke="#8f8f8f" stroke-width="1.3"/><circle cx="484.5" cy="280" r="3.4" fill="#fff" stroke="#8f8f8f" stroke-width="1.3"/><circle cx="156.5" cy="378" r="3.4" fill="#fff" stroke="#8f8f8f" stroke-width="1.3"/><circle cx="320.5" cy="378" r="3.4" fill="#fff" stroke="#8f8f8f" stroke-width="1.3"/><circle cx="484.5" cy="378" r="3.4" fill="#fff" stroke="#8f8f8f" stroke-width="1.3"/><path d="M325.4,157.7 A5,5 0 1 0 323,162.9" fill="none" stroke="#8f8f8f" stroke-width="3"/><path d="M325.4,157.7 A5,5 0 1 0 323,162.9" fill="none" stroke="#fff" stroke-width="1.1"/><polygon points="322.3,158.3 328.7,158.3 325.5,162.6" fill="#fff" stroke="#8f8f8f" stroke-width="0.9" stroke-linejoin="round"/></svg>
<svg style="position:absolute;left:14px;top:513px;" width="4" height="6" viewBox="0 0 4 6"><polygon points="3.5,0.5 3.5,5.5 0.5,3" fill="#c8c8c8"/></svg>
<svg style="position:absolute;left:28.5px;top:513px;" width="4" height="6" viewBox="0 0 4 6"><polygon points="0.5,0.5 0.5,5.5 3.5,3" fill="#c8c8c8"/></svg>
<svg style="position:absolute;left:113.5px;top:510px;" width="12" height="12" viewBox="0 0 12 12"><circle cx="6" cy="6" r="5.2" fill="none" stroke="#777" stroke-width="0.9"/><path d="M6,3 L6,9 M3,6 L9,6" stroke="#777" stroke-width="0.9"/></svg>
<svg style="position:absolute;left:597px;top:512px;" width="3" height="9" viewBox="0 0 3 9"><circle cx="1.5" cy="1" r="0.6" fill="#999"/><circle cx="1.5" cy="4.3" r="0.6" fill="#999"/><circle cx="1.5" cy="7.6" r="0.6" fill="#999"/></svg>
<svg style="position:absolute;left:610.5px;top:513.5px;" width="4" height="5" viewBox="0 0 4 5"><polygon points="3.5,0 3.5,5 0.5,2.5" fill="#444"/></svg>
<div style="position:absolute;left:959px;top:511.4px;width:18.6px;height:9px;background:#dcdcdc"></div>
<svg style="position:absolute;left:981px;top:513.5px;" width="4" height="5" viewBox="0 0 4 5"><polygon points="0.5,0 0.5,5 3.5,2.5" fill="#444"/></svg>
<svg style="position:absolute;left:991px;top:138.5px;" width="5" height="4" viewBox="0 0 5 4"><polygon points="0,3.5 5,3.5 2.5,0.5" fill="#555"/></svg>
<svg style="position:absolute;left:991px;top:502px;" width="5" height="4" viewBox="0 0 5 4"><polygon points="0,0.5 5,0.5 2.5,3.5" fill="#555"/></svg>
<div style="position:absolute;left:988.5px;top:482px;width:9.5px;height:17.5px;background:#dcdcdc"></div>
<svg style="position:absolute;left:808.5px;top:525px;" width="11" height="10" viewBox="0 0 11 10"><g stroke="#777" stroke-width="0.7" fill="none"><rect x="0.5" y="0.5" width="10" height="9"/><line x1="3.8" y1="0.5" x2="3.8" y2="9.5"/><line x1="7.2" y1="0.5" x2="7.2" y2="9.5"/><line x1="0.5" y1="3.5" x2="10.5" y2="3.5"/><line x1="0.5" y1="6.5" x2="10.5" y2="6.5"/></g></svg>
<svg style="position:absolute;left:834.5px;top:525px;" width="10" height="10" viewBox="0 0 10 10"><g stroke="#777" stroke-width="0.7" fill="none"><rect x="0.5" y="0.5" width="9" height="9"/><rect x="2.5" y="2" width="5" height="6"/></g></svg>
<svg style="position:absolute;left:861px;top:525px;" width="10" height="10" viewBox="0 0 10 10"><g stroke="#777" stroke-width="0.7" fill="none"><rect x="0.5" y="0.5" width="9" height="9"/><line x1="5" y1="0.5" x2="5" y2="5.5"/><line x1="0.5" y1="5.5" x2="5" y2="5.5"/></g></svg>
<svg style="position:absolute;left:883px;top:529px;" width="6" height="2" viewBox="0 0 6 2"><line x1="0.5" y1="1" x2="5.5" y2="1" stroke="#555" stroke-width="0.9"/></svg>
<div style="position:absolute;left:891px;top:529.5px;width:64px;height:1px;background:#a8a8a8"></div>
<div style="position:absolute;left:922.3px;top:525.5px;width:3.2px;height:9px;background:#6a6a6a"></div>
<svg style="position:absolute;left:958.5px;top:526.5px;" width="7" height="7" viewBox="0 0 7 7"><path d="M3.5,0.5 L3.5,6.5 M0.5,3.5 L6.5,3.5" stroke="#555" stroke-width="0.9"/></svg>
<svg style="position:absolute;left:10px;top:544.8px;" width="11" height="11" viewBox="0 0 11 11"><g fill="#fff"><polygon points="0,1.3 4.8,0.6 4.8,4.9 0,4.9"/><polygon points="5.5,0.5 10.8,-0.2 10.8,4.9 5.5,4.9"/><polygon points="0,5.6 4.8,5.6 4.8,9.9 0,9.2"/><polygon points="5.5,5.6 10.8,5.6 10.8,10.7 5.5,10"/></g></svg>
<svg style="position:absolute;left:40px;top:543px;" width="12" height="13" viewBox="0 0 12 13"><circle cx="7.3" cy="4.8" r="3.8" fill="none" stroke="#333" stroke-width="1.1"/><line x1="4.6" y1="7.6" x2="0.8" y2="11.6" stroke="#333" stroke-width="1.2"/></svg>
<svg style="position:absolute;left:265px;top:544px;" width="12" height="12" viewBox="0 0 12 12"><circle cx="6" cy="6" r="4.8" fill="none" stroke="#fff" stroke-width="1.3"/></svg>
<svg style="position:absolute;left:296px;top:544px;" width="13" height="12" viewBox="0 0 13 12"><g fill="none" stroke="#e8e8e8" stroke-width="0.9"><rect x="1.5" y="2.5" width="6" height="7"/><line x1="0" y1="1" x2="9" y2="1"/><line x1="0" y1="11" x2="9" y2="11"/><line x1="11" y1="4" x2="11" y2="11"/></g><circle cx="11" cy="1.7" r="0.8" fill="#e8e8e8"/></svg>
<svg style="position:absolute;left:327px;top:541px;" width="17" height="17" viewBox="0 0 17 17"><defs><linearGradient id="eg" x1="0" y1="0" x2="1" y2="1"><stop offset="0" stop-color="#35c1f1"/><stop offset="0.5" stop-color="#1b9de2"/><stop offset="1" stop-color="#0c59a4"/></linearGradient></defs><circle cx="8.5" cy="8.5" r="8" fill="url(#eg)"/><path d="M2,6 Q6,1 12,3 Q16.5,5 16,9 L7,9 Q7,12 10,13 Q13,13.5 15,12 Q13,16.5 8,16.5 Q2,16 1.5,10 Z" fill="#48d27a" opacity="0.55"/><ellipse cx="9.5" cy="9.8" rx="3" ry="2.5" fill="#0c59a4"/></svg>
<svg style="position:absolute;left:359px;top:542px;" width="17" height="15" viewBox="0 0 17 15"><path d="M0.5,1 L6,1 L7.5,3 L16.5,3 L16.5,14 L0.5,14 Z" fill="#f3b73a"/><rect x="0.5" y="5" width="16" height="9" fill="#fcd462"/><rect x="4.5" y="9" width="8" height="5" fill="#2e87d8"/><rect x="6" y="11" width="5" height="3" fill="#fcd462"/></svg>
<svg style="position:absolute;left:392px;top:540px;" width="16" height="18" viewBox="0 0 16 18"><path d="M4.5,5 L4.5,2.5 Q4.5,0.8 8,0.8 Q11.5,0.8 11.5,2.5 L11.5,5" fill="none" stroke="#eee" stroke-width="1.1"/><rect x="0.5" y="4.5" width="15" height="13" fill="#f3f3f3"/><rect x="5" y="8.5" width="2.8" height="2.8" fill="#f25022"/><rect x="8.3" y="8.5" width="2.8" height="2.8" fill="#7fba00"/><rect x="5" y="11.8" width="2.8" height="2.8" fill="#00a4ef"/><rect x="8.3" y="11.8" width="2.8" height="2.8" fill="#ffb900"/></svg>
<svg style="position:absolute;left:424.5px;top:542px;" width="16" height="16" viewBox="0 0 16 16"><circle cx="8" cy="8" r="7.5" fill="#1e88d9"/><circle cx="8" cy="8" r="6.3" fill="none" stroke="#fff" stroke-width="0.7"/><path d="M3.5,11.5 L8,7.5 M8.5,5.5 Q10,3 12.5,4.5 L11,6 L12,7 L13,5.5 Q13.5,8.5 10.5,8.5 Q9.5,8.5 8,7.5" fill="none" stroke="#fff" stroke-width="1.2"/></svg>
<svg style="position:absolute;left:457px;top:541px;" width="15" height="17" viewBox="0 0 15 17"><path d="M1,3.5 L10,0.5 L14,1.8 L14,15.2 L10,16.5 L1,13.5 L10,14.8 L10,2.2 L4.5,4 L4.5,12 L1,13.5 Z" fill="#e8391e"/><path d="M10,0.5 L14,1.8 L14,15.2 L10,16.5 Z" fill="#c52b18"/></svg>
<svg style="position:absolute;left:489px;top:542px;" width="16" height="16" viewBox="0 0 16 16"><circle cx="8" cy="8" r="7.6" fill="#db4437"/><path d="M8,8 L15.1,5.3 A7.6,7.6 0 0 1 10,15.3 Z" fill="#f4c20d"/><path d="M8,8 L10,15.3 A7.6,7.6 0 0 1 1.2,4.7 Z" fill="#0f9d58"/><circle cx="8" cy="8" r="3.6" fill="#fff"/><circle cx="8" cy="8" r="2.8" fill="#4285f4"/></svg>
<svg style="position:absolute;left:521px;top:542px;" width="16" height="16" viewBox="0 0 16 16"><rect x="0.5" y="0.5" width="15" height="15" rx="4" fill="#2d8cff"/><rect x="3" y="5.5" width="6.5" height="5" rx="1" fill="#fff"/><polygon points="10,7.3 13,5.5 13,10.5 10,8.7" fill="#fff"/></svg>
<svg style="position:absolute;left:552px;top:541px;" width="18" height="17" viewBox="0 0 18 17"><rect x="5" y="0.5" width="12.5" height="16" rx="1" fill="#21a366"/><rect x="5" y="0.5" width="12.5" height="5.3" fill="#33c481"/><rect x="5" y="11" width="12.5" height="5.5" fill="#107c41"/><rect x="0.5" y="4" width="9" height="9" rx="0.8" fill="#185c37"/><path d="M2.8,6 L7.2,11 M7.2,6 L2.8,11" stroke="#fff" stroke-width="1.1"/></svg>
<svg style="position:absolute;left:829px;top:546px;" width="9" height="6" viewBox="0 0 9 6"><polyline points="0.5,5 4.5,1 8.5,5" fill="none" stroke="#fff" stroke-width="0.9"/></svg>
<svg style="position:absolute;left:843px;top:545px;" width="12" height="8" viewBox="0 0 12 8"><path d="M2.5,7.5 Q0.3,7.5 0.5,5.5 Q0.8,3.8 2.5,4 Q3,1 6,1 Q9,1 9.3,3.8 Q11.7,3.8 11.5,5.8 Q11.3,7.5 9.5,7.5 Z" fill="#fff"/></svg>
<svg style="position:absolute;left:859px;top:544px;" width="12" height="9" viewBox="0 0 12 9"><rect x="2" y="2.5" width="9.5" height="6" fill="#fff"/><rect x="0.5" y="1" width="3" height="2" fill="#fff"/><rect x="5" y="3.5" width="5" height="3" fill="#444"/></svg>
<svg style="position:absolute;left:875px;top:544px;" width="11" height="10" viewBox="0 0 11 10"><g fill="none" stroke="#bbb" stroke-width="0.8"><path d="M1,9 A8,8 0 0 1 9,1"/><path d="M3,9 A6,6 0 0 1 9,3"/><path d="M5,9 A4,4 0 0 1 9,5"/></g><circle cx="9" cy="9" r="0.9" fill="#fff"/></svg>
<svg style="position:absolute;left:889.5px;top:544.5px;" width="12" height="10" viewBox="0 0 12 10"><path d="M0.5,3 L2.5,3 L5,0.5 L5,9.5 L2.5,7 L0.5,7 Z" fill="none" stroke="#fff" stroke-width="0.8"/><path d="M7,3 Q8.3,5 7,7 M8.8,1.8 Q11,5 8.8,8.2" fill="none" stroke="#fff" stroke-width="0.8"/></svg>
<svg style="position:absolute;left:904.5px;top:544px;" width="11" height="11" viewBox="0 0 11 11"><circle cx="5.5" cy="5.5" r="5" fill="#d8d8d8"/><path d="M3.3,3.3 L7.7,7.7 M7.7,3.3 L3.3,7.7" stroke="#333" stroke-width="1.1"/></svg>
<svg style="position:absolute;left:973px;top:543px;" width="16" height="15" viewBox="0 0 16 15"><path d="M0.5,0.5 L11.5,0.5 L11.5,8.5 L6,8.5 L3.5,11 L3.5,8.5 L0.5,8.5 Z" fill="#fff"/><g stroke="#444" stroke-width="0.7"><line x1="2.5" y1="3" x2="9.5" y2="3"/><line x1="2.5" y1="5" x2="9.5" y2="5"/></g><circle cx="11" cy="10" r="4.3" fill="#2b2726" stroke="#ddd" stroke-width="0.7"/><text x="11" y="12.6" font-family="Liberation Sans" font-size="7" text-anchor="middle" fill="#fff">4</text></svg>
<div style="position:absolute;left:484px;top:90px;width:118.5px;height:265.5px;background:#fff;border:1px solid #c8c8c8;box-shadow:1.5px 1.5px 2px rgba(0,0,0,0.18)"></div>
<div style="position:absolute;left:500px;top:123.2px;width:101.5px;height:14.2px;background:#e8e8e8"></div>
<div style="position:absolute;left:485px;top:307.8px;width:116.5px;height:15px;background:#c8c8c8"></div>
<div style="position:absolute;left:505.5px;top:157.5px;width:96px;height:1px;background:#e4e4e4"></div>
<div style="position:absolute;left:505.5px;top:190.7px;width:96px;height:1px;background:#e4e4e4"></div>
<div style="position:absolute;left:505.5px;top:238.6px;width:96px;height:1px;background:#e4e4e4"></div>
<div style="position:absolute;left:505.5px;top:256px;width:96px;height:1px;background:#e4e4e4"></div>
<div style="position:absolute;left:505.5px;top:273.3px;width:96px;height:1px;background:#e4e4e4"></div>
<div style="position:absolute;left:505.5px;top:290.4px;width:96px;height:1px;background:#e4e4e4"></div>
<div id="t94" style="position:absolute;left:505px;top:95.63px;font-size:8.27px;line-height:10.34px;color:#444;font-weight:normal;font-family:'Liberation Sans', sans-serif;white-space:nowrap;transform:scaleX(0.8921);transform-origin:left center;-webkit-text-stroke:0.05px currentColor">切り取り(<u>T</u>)</div>
<div id="t95" style="position:absolute;left:505px;top:111.13px;font-size:8.27px;line-height:10.34px;color:#444;font-weight:normal;font-family:'Liberation Sans', sans-serif;white-space:nowrap;transform:scaleX(0.8588);transform-origin:left center;-webkit-text-stroke:0.05px currentColor">コピー(<u>C</u>)</div>
<div id="t96" style="position:absolute;left:505px;top:126.43px;font-size:8.27px;line-height:10.34px;color:#333;font-weight:bold;font-family:'Liberation Sans', sans-serif;white-space:nowrap;transform:scaleX(0.8276);transform-origin:left center;-webkit-text-stroke:0">貼り付けのオプション:</div>
<div id="t97" style="position:absolute;left:505px;top:162.63px;font-size:8.27px;line-height:10.34px;color:#444;font-weight:normal;font-family:'Liberation Sans', sans-serif;white-space:nowrap;transform:scaleX(0.8651);transform-origin:left center;-webkit-text-stroke:0.05px currentColor">テキストの編集(<u>X</u>)</div>
<div id="t98" style="position:absolute;left:505px;top:178.83px;font-size:8.27px;line-height:10.34px;color:#444;font-weight:normal;font-family:'Liberation Sans', sans-serif;white-space:nowrap;transform:scaleX(0.9599);transform-origin:left center;-webkit-text-stroke:0.05px currentColor">頂点の編集(<u>E</u>)</div>
<div id="t99" style="position:absolute;left:505px;top:195.63px;font-size:8.27px;line-height:10.34px;color:#ababab;font-weight:normal;font-family:'Liberation Sans', sans-serif;white-space:nowrap;transform:scaleX(0.8659);transform-origin:left center;-webkit-text-stroke:0.05px currentColor">グループ化(<u>G</u>)</div>
<div id="t100" style="position:absolute;left:505px;top:211.13px;font-size:8.27px;line-height:10.34px;color:#ababab;font-weight:normal;font-family:'Liberation Sans', sans-serif;white-space:nowrap;transform:scaleX(0.9577);transform-origin:left center;-webkit-text-stroke:0.05px currentColor">最前面へ移動(<u>R</u>)</div>
<div id="t101" style="position:absolute;left:505px;top:226.83px;font-size:8.27px;line-height:10.34px;color:#ababab;font-weight:normal;font-family:'Liberation Sans', sans-serif;white-space:nowrap;transform:scaleX(0.9653);transform-origin:left center;-webkit-text-stroke:0.05px currentColor">最背面へ移動(<u>K</u>)</div>
<div id="t102" style="position:absolute;left:505px;top:243.63px;font-size:8.27px;line-height:10.34px;color:#444;font-weight:normal;font-family:'Liberation Sans', sans-serif;white-space:nowrap;transform:scaleX(0.8326);transform-origin:left center;-webkit-text-stroke:0.05px currentColor">リンク(<u>I</u>)</div>
<div id="t103" style="position:absolute;left:505px;top:261.63px;font-size:8.27px;line-height:10.34px;color:#444;font-weight:normal;font-family:'Liberation Sans', sans-serif;white-space:nowrap;transform:scaleX(0.8686);transform-origin:left center;-webkit-text-stroke:0.05px currentColor">スマート検索(<u>L</u>)</div>
<div id="t104" style="position:absolute;left:505px;top:278.03px;font-size:8.27px;line-height:10.34px;color:#444;font-weight:normal;font-family:'Liberation Sans', sans-serif;white-space:nowrap;transform:scaleX(0.8809);transform-origin:left center;-webkit-text-stroke:0.05px currentColor">マクロの登録(<u>N</u>)...</div>
<div id="t105" style="position:absolute;left:505px;top:295.93px;font-size:8.27px;line-height:10.34px;color:#444;font-weight:normal;font-family:'Liberation Sans', sans-serif;white-space:nowrap;transform:scaleX(0.8951);transform-origin:left center;-webkit-text-stroke:0.05px currentColor">代替テキストの編集(<u>A</u>)...</div>
<div id="t106" style="position:absolute;left:505px;top:311.13px;font-size:8.27px;line-height:10.34px;color:#444;font-weight:normal;font-family:'Liberation Sans', sans-serif;white-space:nowrap;transform:scaleX(0.9534);transform-origin:left center;-webkit-text-stroke:0.05px currentColor">既定の図形に設定(<u>D</u>)</div>
<div id="t107" style="position:absolute;left:505px;top:326.63px;font-size:8.27px;line-height:10.34px;color:#444;font-weight:normal;font-family:'Liberation Sans', sans-serif;white-space:nowrap;transform:scaleX(0.7934);transform-origin:left center;-webkit-text-stroke:0.05px currentColor">サイズとプロパティ(<u>Z</u>)...</div>
<div id="t108" style="position:absolute;left:505px;top:342.63px;font-size:8.27px;line-height:10.34px;color:#444;font-weight:normal;font-family:'Liberation Sans', sans-serif;white-space:nowrap;transform:scaleX(0.9752);transform-origin:left center;-webkit-text-stroke:0.05px currentColor">図形の書式設定(<u>O</u>)...</div>
<svg style="position:absolute;left:592px;top:197.5px;" width="3" height="5" viewBox="0 0 3 5"><polygon points="0.3,0 0.3,5 2.8,2.5" fill="#aaa"/></svg>
<svg style="position:absolute;left:592px;top:213.0px;" width="3" height="5" viewBox="0 0 3 5"><polygon points="0.3,0 0.3,5 2.8,2.5" fill="#aaa"/></svg>
<svg style="position:absolute;left:592px;top:228.7px;" width="3" height="5" viewBox="0 0 3 5"><polygon points="0.3,0 0.3,5 2.8,2.5" fill="#aaa"/></svg>
<div style="position:absolute;left:586px;top:211.0px;width:0.8px;height:9px;background:#d0d0d0"></div>
<div style="position:absolute;left:586px;top:226.7px;width:0.8px;height:9px;background:#d0d0d0"></div>
<svg style="position:absolute;left:486.5px;top:94px;" width="11" height="11" viewBox="0 0 11 11"><path d="M2.5,0.5 L7,6 M8.5,0.5 L4,6" stroke="#444" stroke-width="0.9"/><circle cx="3" cy="8.3" r="1.8" fill="none" stroke="#3c78c3" stroke-width="0.9"/><circle cx="8" cy="8.3" r="1.8" fill="none" stroke="#3c78c3" stroke-width="0.9"/></svg>
<svg style="position:absolute;left:486.5px;top:110px;" width="11" height="11" viewBox="0 0 11 11"><path d="M0.5,0.5 L4.5,0.5 L5.5,1.5 L5.5,6.5 L0.5,6.5 Z" fill="#fff" stroke="#666" stroke-width="0.7"/><path d="M4,3.5 L8.5,3.5 L10,5 L10,10.2 L4,10.2 Z" fill="#fff" stroke="#666" stroke-width="0.7"/><path d="M5.5,6.5 L8.5,6.5 M5.5,8.3 L8.5,8.3" stroke="#3c78c3" stroke-width="0.7"/><path d="M1.5,2.5 L3,2.5" stroke="#3c78c3" stroke-width="0.6"/></svg>
<svg style="position:absolute;left:486px;top:124px;" width="12" height="12" viewBox="0 0 12 12"><rect x="0.5" y="1.5" width="8" height="9.5" fill="#e7b866"/><rect x="2.5" y="0.3" width="4" height="2.2" fill="#777"/><path d="M5,5 L9,5 L11,7 L11,11.5 L5,11.5 Z" fill="#fff" stroke="#555" stroke-width="0.7"/></svg>
<svg style="position:absolute;left:504.5px;top:141.5px;" width="12" height="12.5" viewBox="0 0 12 12.5"><rect x="0.5" y="1.8" width="8" height="9.5" fill="#e7b866"/><rect x="2.5" y="0.3" width="4" height="2.2" fill="#777"/><path d="M5,5 L9,5 L11,7 L11,12 L5,12 Z" fill="#fff" stroke="#555" stroke-width="0.7"/></svg>
<svg style="position:absolute;left:486.5px;top:162px;" width="11" height="9" viewBox="0 0 11 9"><rect x="0.5" y="0.5" width="9.5" height="8" fill="#fff" stroke="#777" stroke-width="0.7"/><line x1="2" y1="5" x2="9" y2="5" stroke="#bbb" stroke-width="0.7"/><line x1="2" y1="6.8" x2="9" y2="6.8" stroke="#bbb" stroke-width="0.7"/><rect x="2" y="1.6" width="2.2" height="2.2" fill="#4a86c8"/></svg>
<svg style="position:absolute;left:486.5px;top:178px;" width="11" height="9" viewBox="0 0 11 9"><g fill="none" stroke="#888" stroke-width="0.7" stroke-dasharray="1.2,0.8"><polyline points="1,1 9.5,0.8"/><polyline points="1,1 1,7.5 9.5,7.5"/><polyline points="9.5,0.8 2.5,4 9.5,7.5"/></g><g fill="#3a72c0"><circle cx="1" cy="1" r="0.9"/><circle cx="9.5" cy="0.8" r="0.9"/><circle cx="1" cy="7.5" r="0.9"/><circle cx="9.5" cy="7.5" r="0.9"/><circle cx="2.5" cy="4" r="0.9"/></g></svg>
<svg style="position:absolute;left:486.5px;top:195px;" width="11" height="10" viewBox="0 0 11 10"><rect x="1" y="1" width="9" height="8" fill="none" stroke="#c4c4c4" stroke-width="0.8" stroke-dasharray="1.2,0.8"/><rect x="3" y="3" width="5" height="4" fill="none" stroke="#c4c4c4" stroke-width="0.8"/></svg>
<svg style="position:absolute;left:486.5px;top:210.5px;" width="10" height="10" viewBox="0 0 10 10"><rect x="0.5" y="0.5" width="4" height="4" fill="#fff" stroke="#c0c0c0" stroke-width="0.7"/><rect x="2.5" y="2.5" width="4.5" height="4.5" fill="#c8c8c8"/><rect x="5" y="5" width="4" height="4" fill="#fff" stroke="#c0c0c0" stroke-width="0.7"/></svg>
<svg style="position:absolute;left:486.5px;top:226px;" width="10" height="10" viewBox="0 0 10 10"><rect x="0.5" y="0.5" width="4" height="4" fill="#c8c8c8"/><rect x="2.5" y="2.5" width="4.5" height="4.5" fill="#fff" stroke="#c0c0c0" stroke-width="0.7"/><rect x="5" y="5" width="4" height="4" fill="#fff" stroke="#c0c0c0" stroke-width="0.7"/></svg>
<svg style="position:absolute;left:486.5px;top:242.5px;" width="11" height="11" viewBox="0 0 11 11"><circle cx="4.5" cy="4.5" r="4" fill="#fff" stroke="#666" stroke-width="0.8"/><path d="M0.5,4.5 L8.5,4.5 M4.5,0.5 Q2,4.5 4.5,8.5 M4.5,0.5 Q7,4.5 4.5,8.5" fill="none" stroke="#666" stroke-width="0.6"/><path d="M3,8.5 Q3,6.8 5,6.8 L8,6.8 Q10.3,6.8 10.3,8.5 Q10.3,10.2 8,10.2 L5,10.2 Q3,10.2 3,8.5" fill="none" stroke="#3c78c3" stroke-width="1"/></svg>
<svg style="position:absolute;left:486.5px;top:260px;" width="11" height="11" viewBox="0 0 11 11"><circle cx="6.5" cy="4.5" r="3.8" fill="none" stroke="#3c78c3" stroke-width="1.1"/><line x1="4" y1="7" x2="0.8" y2="10.3" stroke="#3c78c3" stroke-width="1.5"/><text x="6.5" y="7" font-family="Liberation Serif" font-size="6" text-anchor="middle" fill="#444">i</text></svg>
<svg style="position:absolute;left:486.5px;top:294px;" width="11" height="11" viewBox="0 0 11 11"><rect x="0.5" y="0.5" width="9" height="8" fill="#fff" stroke="#777" stroke-width="0.7"/><path d="M1,8.2 L4,5 L6,7 L7,6 L9.5,8.2 Z" fill="#3c78c3"/><circle cx="7" cy="2.8" r="0.9" fill="#f0b642"/><rect x="3" y="8.5" width="7.5" height="2" fill="#fff" stroke="#777" stroke-width="0.6"/></svg>
<svg style="position:absolute;left:486.5px;top:325px;" width="11" height="12" viewBox="0 0 11 12"><rect x="5" y="1" width="4.5" height="10" fill="#fff" stroke="#777" stroke-width="0.7"/><line x1="2.3" y1="2" x2="2.3" y2="10" stroke="#3c78c3" stroke-width="0.8"/><polygon points="0.8,3 3.8,3 2.3,0.8" fill="#3c78c3"/><polygon points="0.8,9 3.8,9 2.3,11.2" fill="#3c78c3"/><rect x="1.5" y="5" width="1.8" height="1.8" fill="#fff" stroke="#666" stroke-width="0.5"/></svg>
<svg style="position:absolute;left:486.5px;top:341px;" width="12" height="11" viewBox="0 0 12 11"><path d="M0.8,3 L4.5,0.5 L8.5,3.5 L5,6.5 Z" fill="#fff" stroke="#666" stroke-width="0.7"/><path d="M3,9 L8,4.5 L10.5,6 L5.5,10.5 Z" fill="#3c78c3"/><path d="M1,10.5 L4,8.2" stroke="#3c78c3" stroke-width="1"/></svg>
<div style="position:absolute;left:484.4px;top:365.4px;width:76.2px;height:43px;background:#fff;border:1px solid #d4d4d4;box-shadow:1px 1px 2px rgba(0,0,0,0.15)"></div>
<svg style="position:absolute;left:492px;top:370.5px;" width="15" height="14" viewBox="0 0 15 14"><path d="M1.2,1.2 L9.5,1.2 Q10.8,1.2 10.8,2.5 L10.8,5 M5,10.8 L2.5,10.8 Q1.2,10.8 1.2,9.5 L1.2,1.2" fill="none" stroke="#666" stroke-width="0.8"/><path d="M4.5,12.5 L12.5,4.5" stroke="#3c78c3" stroke-width="1.6"/><path d="M4,12.8 L6,11" stroke="#2a5d9f" stroke-width="1.5"/></svg>
<svg style="position:absolute;left:506.5px;top:376.0px;" width="4" height="3" viewBox="0 0 4 3"><polygon points="0,0.5 4,0.5 2,2.8" fill="#555"/></svg>
<svg style="position:absolute;left:513.5px;top:369.5px;" width="16" height="17" viewBox="0 0 16 17"><path d="M2.5,7.5 L1.5,5 L5.8,1.5 L9.8,5.5 L5.8,9.5 Z" fill="#fff" stroke="#666" stroke-width="0.8"/><path d="M9.8,5.5 Q11.5,7.5 10.8,9.8" fill="none" stroke="#3c78c3" stroke-width="1.1"/><path d="M3.5,0.5 L5.8,1.5" stroke="#666" stroke-width="0.8"/><rect x="0.5" y="10.8" width="14.5" height="3.2" fill="#fff" stroke="#bbb" stroke-width="0.7"/></svg>
<svg style="position:absolute;left:530px;top:376.0px;" width="4" height="3" viewBox="0 0 4 3"><polygon points="0,0.5 4,0.5 2,2.8" fill="#555"/></svg>
<svg style="position:absolute;left:538px;top:370px;" width="17" height="16" viewBox="0 0 17 16"><path d="M1.2,1.2 L9,1.2 M1.2,1.2 L1.2,9 L5,9" fill="none" stroke="#666" stroke-width="0.8"/><path d="M4.5,9.5 L11.5,2" stroke="#3c78c3" stroke-width="1.5"/><rect x="0.5" y="11.8" width="15.5" height="3.4" fill="#f00"/></svg>
<svg style="position:absolute;left:554.5px;top:376.0px;" width="4" height="3" viewBox="0 0 4 3"><polygon points="0,0.5 4,0.5 2,2.8" fill="#555"/></svg>
<div style="position:absolute;left:198px;width:600px;text-align:center;top:385.91px;font-size:7.83px;line-height:9.79px;color:#555;font-weight:normal;font-family:'Liberation Sans', sans-serif;white-space:nowrap;"><span id="t109" style="display:inline-block;transform:scaleX(0.7083);transform-origin:center center;">スタイ</span></div>
<div style="position:absolute;left:198px;width:600px;text-align:center;top:396.91px;font-size:7.83px;line-height:9.79px;color:#555;font-weight:normal;font-family:'Liberation Sans', sans-serif;white-space:nowrap;"><span id="t110" style="display:inline-block;transform:scaleX(0.7500);transform-origin:center center;">ル</span></div>
<div style="position:absolute;left:222.5px;width:600px;text-align:center;top:385.91px;font-size:7.83px;line-height:9.79px;color:#555;font-weight:normal;font-family:'Liberation Sans', sans-serif;white-space:nowrap;"><span id="t111" style="display:inline-block;transform:scaleX(0.7292);transform-origin:center center;">塗りつ</span></div>
<div style="position:absolute;left:222.5px;width:600px;text-align:center;top:396.91px;font-size:7.83px;line-height:9.79px;color:#555;font-weight:normal;font-family:'Liberation Sans', sans-serif;white-space:nowrap;"><span id="t112" style="display:inline-block;transform:scaleX(0.7500);transform-origin:center center;">ぶし</span></div>
<div style="position:absolute;left:246.5px;width:600px;text-align:center;top:391.91px;font-size:7.83px;line-height:9.79px;color:#555;font-weight:normal;font-family:'Liberation Sans', sans-serif;white-space:nowrap;"><span id="t113" style="display:inline-block;transform:scaleX(0.9375);transform-origin:center center;">枠線</span></div>
</body></html>
